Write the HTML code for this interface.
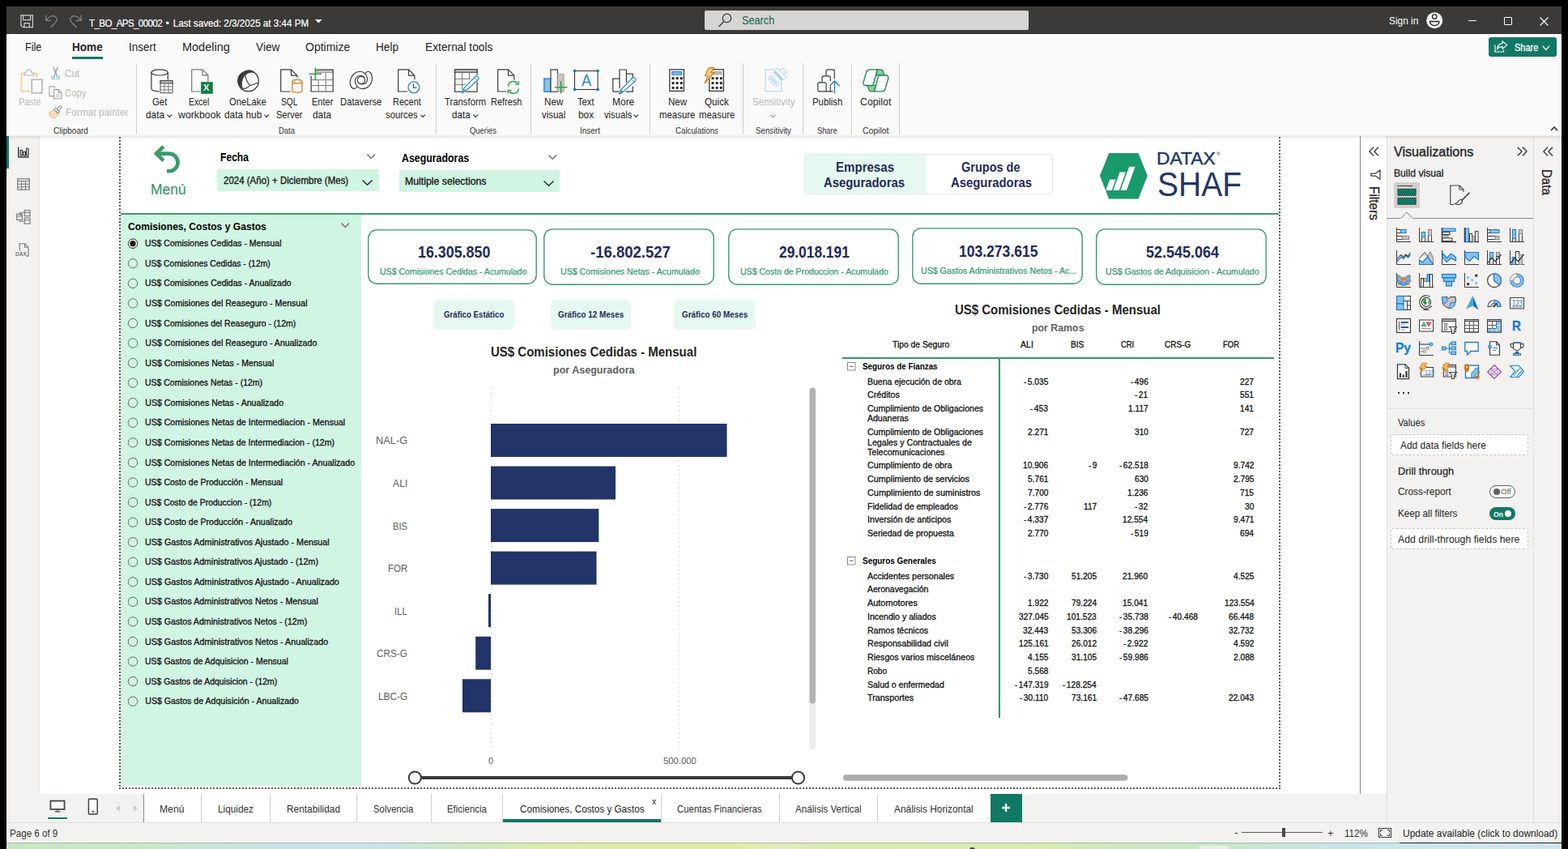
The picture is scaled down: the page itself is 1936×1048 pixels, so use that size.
<!DOCTYPE html>
<html lang="es"><head><meta charset="utf-8"><title>T_BO_APS_00002 - Power BI Desktop</title>
<style>
html,body{margin:0;padding:0;}
body{width:1936px;height:1048px;background:#000;overflow:hidden;position:relative;
 font-family:"Liberation Sans",sans-serif;color:#252423;}
.b{position:absolute;box-sizing:border-box;}
.t{position:absolute;white-space:nowrap;line-height:1;transform-origin:0 0;}
svg{overflow:visible;}
.dr{-webkit-text-stroke:0.3px currentColor;}
.dr2{-webkit-text-stroke:0.2px currentColor;}
</style></head>
<body>
<div class="b win" style="left:8px;top:8px;width:1920px;height:1032px;background:#ffffff;"></div>
<div class="b" style="left:8px;top:1040px;width:1920px;height:8px;background:linear-gradient(90deg,#c8e6c2 0%,#c9e7c4 8%,#c8e6de 15%,#c6e4ea 18%,#c6e5e8 24%,#cde8c6 29%,#d9ecac 34%,#deeda4 47%,#dfecc0 50%,#d6ebae 53%,#d8ecae 66%,#cde8c0 72%,#c8e6cf 80%,#c8e6e6 85%,#d0e5ee 100%);"></div>
<div class="b" style="left:8px;top:1040px;width:1920px;height:1px;background:rgba(110,130,110,.5);"></div>
<div class="b" style="left:1480px;top:1044px;width:38px;height:6px;background:#e6f0e6;border-radius:4px 4px 0 0;"></div>
<div class="b" style="left:1197px;top:1046px;width:7px;height:4px;background:#3a4a3c;border-radius:3px 3px 0 0;"></div>
<div class="b" style="left:1728px;top:1039px;width:200px;height:2px;background:#1b1a19;"></div>
<div class="b" style="left:8px;top:8px;width:1920px;height:34px;background:#3b3a39;"></div>
<div class="b" style="left:8px;top:41px;width:1920px;height:1px;background:#323130;"></div>
<div class="b" style="left:870px;top:13px;width:400px;height:24px;background:#d6d5d3;border-radius:2px;"></div>
<div class="b" style="left:9px;top:43px;width:1919px;height:124px;background:#fafafa;"></div>
<div class="b" style="left:8px;top:167px;width:1920px;height:1px;background:#f0f0f0;"></div>
<div class="b" style="left:8px;top:168px;width:40px;height:848px;background:#f3f2f1;"></div>
<div class="b" style="left:8px;top:168px;width:3px;height:40px;background:#117865;"></div>
<div class="b" style="left:48px;top:169px;width:1px;height:811px;background:#e6e5e3;"></div>
<div class="b" style="left:1679px;top:168px;width:1px;height:812px;background:#8a8886;"></div>
<div class="b" style="left:1712px;top:168px;width:216px;height:848px;background:#f3f2f1;"></div>
<div class="b" style="left:1712px;top:168px;width:1px;height:848px;background:#e1dfdd;"></div>
<div class="b" style="left:1893px;top:168px;width:1px;height:848px;background:#e1dfdd;"></div>
<div class="b" style="left:8px;top:980px;width:1704px;height:36px;background:#f3f2f1;"></div>
<div class="b" style="left:177px;top:980px;width:1046px;height:35px;background:#ffffff;"></div>
<div class="b" style="left:8px;top:1015px;width:1920px;height:1px;background:#e1dfdd;"></div>
<div class="b" style="left:8px;top:1016px;width:1920px;height:23px;background:#f3f2f1;"></div>
<div class="b" style="left:8px;top:1039px;width:1920px;height:1px;background:#ffffff;"></div>
<div class="b" style="left:8px;top:168px;width:1920px;height:5px;background:linear-gradient(180deg,rgba(0,0,0,.11),rgba(0,0,0,.04) 45%,rgba(0,0,0,0));z-index:5;"></div>
<span class="t dr2" style="left:110.00px;top:23px;font-size:12.8px;transform:scaleX(0.9088);color:#ffffff;"><span style="letter-spacing:-0.704px">T_BO_APS_00002</span><span style="display:inline-block;width:15.07px;text-align:center"> • </span>Last saved: 2/3/2025 at 3:44 PM</span>
<span class="t" style="left:915.80px;top:19px;font-size:13.8px;transform:scaleX(0.9216);color:#14604f;">Search</span>
<span class="t" style="left:1714.90px;top:19px;font-size:13.4px;transform:scaleX(0.8859);color:#ffffff;">Sign in</span>
<span class="t" style="left:31.00px;top:51px;font-size:14.4px;transform:scaleX(0.8748);color:#252423;">File</span>
<span class="t" style="left:89.30px;top:51px;font-size:14.4px;transform:scaleX(0.9423);font-weight:700;color:#252423;">Home</span>
<span class="t" style="left:158.80px;top:51px;font-size:14.4px;transform:scaleX(0.9357);color:#252423;">Insert</span>
<span class="t" style="left:225.00px;top:51px;font-size:14.4px;transform:scaleX(1.0062);color:#252423;">Modeling</span>
<span class="t" style="left:315.50px;top:51px;font-size:14.4px;transform:scaleX(0.9531);color:#252423;">View</span>
<span class="t" style="left:376.80px;top:51px;font-size:14.4px;transform:scaleX(0.9716);color:#252423;">Optimize</span>
<span class="t" style="left:464.30px;top:51px;font-size:14.4px;transform:scaleX(0.9454);color:#252423;">Help</span>
<span class="t" style="left:525.00px;top:51px;font-size:14.4px;transform:scaleX(0.9571);color:#252423;">External tools</span>
<div class="b" style="left:89px;top:70px;width:38px;height:3px;background:#117865;"></div>
<div class="b" style="left:1838px;top:46px;width:84px;height:24px;background:#117865;border-radius:3px;"></div>
<span class="t" style="left:1869.70px;top:53px;font-size:12.3px;transform:scaleX(0.8926);color:#ffffff;-webkit-text-stroke:0.3px #fff;">Share</span>
<div class="b" style="left:168px;top:78px;width:1px;height:88px;background:#d2d0ce;"></div>
<div class="b" style="left:538px;top:78px;width:1px;height:88px;background:#d2d0ce;"></div>
<div class="b" style="left:655px;top:78px;width:1px;height:88px;background:#d2d0ce;"></div>
<div class="b" style="left:802px;top:78px;width:1px;height:88px;background:#d2d0ce;"></div>
<div class="b" style="left:917px;top:78px;width:1px;height:88px;background:#d2d0ce;"></div>
<div class="b" style="left:991px;top:78px;width:1px;height:88px;background:#d2d0ce;"></div>
<div class="b" style="left:1051px;top:78px;width:1px;height:88px;background:#d2d0ce;"></div>
<div class="b" style="left:1110px;top:78px;width:1px;height:88px;background:#d2d0ce;"></div>
<span class="t" style="left:66.00px;top:156px;font-size:11.2px;transform:scaleX(0.8969);color:#323130;">Clipboard</span>
<span class="t" style="left:343.70px;top:156px;font-size:11.2px;transform:scaleX(0.8454);color:#323130;">Data</span>
<span class="t" style="left:580.00px;top:156px;font-size:11.2px;transform:scaleX(0.8415);color:#323130;">Queries</span>
<span class="t" style="left:716.30px;top:156px;font-size:11.2px;transform:scaleX(0.8925);color:#323130;">Insert</span>
<span class="t" style="left:833.50px;top:156px;font-size:11.2px;transform:scaleX(0.8687);color:#323130;">Calculations</span>
<span class="t" style="left:932.70px;top:156px;font-size:11.2px;transform:scaleX(0.8727);color:#323130;">Sensitivity</span>
<span class="t" style="left:1008.90px;top:156px;font-size:11.2px;transform:scaleX(0.8231);color:#323130;">Share</span>
<span class="t" style="left:1064.60px;top:156px;font-size:11.2px;transform:scaleX(0.9293);color:#323130;">Copilot</span>
<span class="t" style="left:22.60px;top:120px;font-size:12.2px;transform:scaleX(0.8783);color:#bebbb8;">Paste</span>
<span class="t" style="left:80.30px;top:85px;font-size:12.2px;transform:scaleX(0.9639);color:#bebbb8;">Cut</span>
<span class="t" style="left:80.30px;top:109px;font-size:12.2px;transform:scaleX(0.9339);color:#bebbb8;">Copy</span>
<span class="t" style="left:80.50px;top:133px;font-size:12.2px;transform:scaleX(0.9782);color:#bebbb8;">Format painter</span>
<span class="t" style="left:188.40px;top:120px;font-size:12.2px;transform:scaleX(0.9357);color:#252423;">Get</span>
<span class="t" style="left:179.70px;top:136px;font-size:12.2px;transform:scaleX(0.9770);color:#252423;">data</span>
<svg class="b" style="left:205.9px;top:141px;" width="6.4" height="4.4" viewBox="0 0 6.4 4.4"><path d="M0.5 0.6 L3.2 3.5 L5.9 0.6" fill="none" stroke="#323130" stroke-width="1.15"/></svg>
<span class="t" style="left:233.20px;top:120px;font-size:12.2px;transform:scaleX(0.8514);color:#252423;">Excel</span>
<span class="t" style="left:219.60px;top:136px;font-size:12.2px;transform:scaleX(1.0093);color:#252423;">workbook</span>
<span class="t" style="left:282.95px;top:120px;font-size:12.2px;transform:scaleX(0.9229);color:#252423;">OneLake</span>
<span class="t" style="left:276.70px;top:136px;font-size:12.2px;transform:scaleX(0.9770);color:#252423;">data hub</span>
<svg class="b" style="left:325.6px;top:141px;" width="6.4" height="4.4" viewBox="0 0 6.4 4.4"><path d="M0.5 0.6 L3.2 3.5 L5.9 0.6" fill="none" stroke="#323130" stroke-width="1.15"/></svg>
<span class="t" style="left:347.20px;top:120px;font-size:12.2px;transform:scaleX(0.8438);color:#252423;">SQL</span>
<span class="t" style="left:341.40px;top:136px;font-size:12.2px;transform:scaleX(0.9044);color:#252423;">Server</span>
<span class="t" style="left:384.80px;top:120px;font-size:12.2px;transform:scaleX(0.9053);color:#252423;">Enter</span>
<span class="t" style="left:386.00px;top:136px;font-size:12.2px;transform:scaleX(0.9728);color:#252423;">data</span>
<span class="t" style="left:420.10px;top:120px;font-size:12.2px;transform:scaleX(0.9244);color:#252423;">Dataverse</span>
<span class="t" style="left:484.55px;top:120px;font-size:12.2px;transform:scaleX(0.9028);color:#252423;">Recent</span>
<span class="t" style="left:476.00px;top:136px;font-size:12.2px;transform:scaleX(0.9317);color:#252423;">sources</span>
<svg class="b" style="left:518.8px;top:141px;" width="6.4" height="4.4" viewBox="0 0 6.4 4.4"><path d="M0.5 0.6 L3.2 3.5 L5.9 0.6" fill="none" stroke="#323130" stroke-width="1.15"/></svg>
<span class="t" style="left:549.40px;top:120px;font-size:12.2px;transform:scaleX(0.9286);color:#252423;">Transform</span>
<span class="t" style="left:557.80px;top:136px;font-size:12.2px;transform:scaleX(0.9518);color:#252423;">data</span>
<svg class="b" style="left:583.6px;top:141px;" width="6.4" height="4.4" viewBox="0 0 6.4 4.4"><path d="M0.5 0.6 L3.2 3.5 L5.9 0.6" fill="none" stroke="#323130" stroke-width="1.15"/></svg>
<span class="t" style="left:605.95px;top:120px;font-size:12.2px;transform:scaleX(0.8966);color:#252423;">Refresh</span>
<span class="t" style="left:672.40px;top:120px;font-size:12.2px;transform:scaleX(0.9588);color:#252423;">New</span>
<span class="t" style="left:669.00px;top:136px;font-size:12.2px;transform:scaleX(0.9393);color:#252423;">visual</span>
<span class="t" style="left:713.10px;top:120px;font-size:12.2px;transform:scaleX(0.9207);color:#252423;">Text</span>
<span class="t" style="left:714.10px;top:136px;font-size:12.2px;transform:scaleX(0.9761);color:#252423;">box</span>
<span class="t" style="left:755.55px;top:120px;font-size:12.2px;transform:scaleX(0.9821);color:#252423;">More</span>
<span class="t" style="left:745.70px;top:136px;font-size:12.2px;transform:scaleX(0.9198);color:#252423;">visuals</span>
<svg class="b" style="left:782.3px;top:141px;" width="6.4" height="4.4" viewBox="0 0 6.4 4.4"><path d="M0.5 0.6 L3.2 3.5 L5.9 0.6" fill="none" stroke="#323130" stroke-width="1.15"/></svg>
<span class="t" style="left:824.60px;top:120px;font-size:12.2px;transform:scaleX(0.9506);color:#252423;">New</span>
<span class="t" style="left:813.90px;top:136px;font-size:12.2px;transform:scaleX(0.9354);color:#252423;">measure</span>
<span class="t" style="left:870.15px;top:120px;font-size:12.2px;transform:scaleX(0.9588);color:#252423;">Quick</span>
<span class="t" style="left:862.90px;top:136px;font-size:12.2px;transform:scaleX(0.9354);color:#252423;">measure</span>
<span class="t" style="left:1002.90px;top:120px;font-size:12.2px;transform:scaleX(0.9346);color:#252423;">Publish</span>
<span class="t" style="left:1061.80px;top:120px;font-size:12.2px;transform:scaleX(1.0111);color:#252423;">Copilot</span>
<span class="t" style="left:928.70px;top:120px;font-size:12.2px;transform:scaleX(0.9578);color:#bebbb8;">Sensitivity</span>
<svg class="b" style="left:951.3px;top:140.6px;" width="7" height="5" viewBox="0 0 7 5"><path d="M0.6 0.8 L3.5 3.8 L6.4 0.8" fill="none" stroke="#a19f9d" stroke-width="1.2"/></svg>
<svg class="b" style="left:1914px;top:154.5px;" width="10" height="7" viewBox="0 0 10 7"><path d="M1 6 L5 2 L9 6" fill="none" stroke="#323130" stroke-width="1.6"/></svg>
<div class="b" style="left:177px;top:980px;width:1px;height:35px;background:#8a8886;"></div>
<div class="b" style="left:248px;top:980px;width:1px;height:35px;background:#d2d0ce;"></div>
<div class="b" style="left:333px;top:980px;width:1px;height:35px;background:#d2d0ce;"></div>
<div class="b" style="left:440px;top:980px;width:1px;height:35px;background:#d2d0ce;"></div>
<div class="b" style="left:532px;top:980px;width:1px;height:35px;background:#d2d0ce;"></div>
<div class="b" style="left:620px;top:980px;width:1px;height:35px;background:#d2d0ce;"></div>
<div class="b" style="left:816px;top:980px;width:1px;height:35px;background:#d2d0ce;"></div>
<div class="b" style="left:962px;top:980px;width:1px;height:35px;background:#d2d0ce;"></div>
<div class="b" style="left:1083px;top:980px;width:1px;height:35px;background:#d2d0ce;"></div>
<div class="b" style="left:1223px;top:980px;width:1px;height:35px;background:#d2d0ce;"></div>
<span class="t" style="left:197.00px;top:993px;font-size:12.5px;transform:scaleX(0.9722);color:#323130;">Menú</span>
<span class="t" style="left:269.00px;top:993px;font-size:12.5px;transform:scaleX(0.9449);color:#323130;">Liquidez</span>
<span class="t" style="left:353.90px;top:993px;font-size:12.5px;transform:scaleX(0.9511);color:#323130;">Rentabilidad</span>
<span class="t" style="left:461.00px;top:993px;font-size:12.5px;transform:scaleX(0.9114);color:#323130;">Solvencia</span>
<span class="t" style="left:551.60px;top:993px;font-size:12.5px;transform:scaleX(0.9122);color:#323130;">Eficiencia</span>
<span class="t" style="left:641.60px;top:993px;font-size:12.5px;transform:scaleX(0.9369);color:#201f1e;">Comisiones, Costos y Gastos</span>
<span class="t" style="left:836.40px;top:993px;font-size:12.5px;transform:scaleX(0.9115);color:#323130;">Cuentas Financieras</span>
<span class="t" style="left:981.80px;top:993px;font-size:12.5px;transform:scaleX(0.9333);color:#323130;">Análisis Vertical</span>
<span class="t" style="left:1104.30px;top:993px;font-size:12.5px;transform:scaleX(0.9502);color:#323130;">Análisis Horizontal</span>
<div class="b" style="left:621px;top:1011px;width:195px;height:4px;background:#117865;"></div>
<span class="t" style="left:805.30px;top:984px;font-size:11px;transform:scaleX(0.9636);color:#252423;">x</span>
<div class="b" style="left:1223px;top:980px;width:39px;height:35px;background:#117865;"></div>
<svg class="b" style="left:1236px;top:990.5px;" width="12" height="12" viewBox="0 0 12 12"><path d="M6 1 V11 M1 6 H11" stroke="#fff" stroke-width="2.4" fill="none"/></svg>
<div class="b" style="left:59px;top:1009px;width:24px;height:2px;background:#117865;border-radius:1px;"></div>
<span class="t" style="left:12.30px;top:1023px;font-size:12px;transform:scaleX(0.9661);color:#323130;">Page 6 of 9</span>
<span class="t" style="left:1523.60px;top:1022px;font-size:12px;transform:scaleX(1.1260);color:#323130;">-</span>
<div class="b" style="left:1533px;top:1027px;width:100px;height:1px;background:#605e5c;"></div>
<div class="b" style="left:1583px;top:1022px;width:4px;height:11px;background:#484644;"></div>
<span class="t" style="left:1639.20px;top:1023px;font-size:12px;color:#323130;">+</span>
<span class="t" style="left:1660.40px;top:1023px;font-size:12px;transform:scaleX(0.9698);color:#323130;">112%</span>
<span class="t" style="left:1732.30px;top:1023px;font-size:12px;transform:scaleX(0.9953);color:#252423;">Update available (click to download)</span>
<div class="b" style="left:147px;top:169px;width:2px;height:802px;background:repeating-linear-gradient(180deg,#605e5c 0 2px,transparent 2px 4px);"></div>
<div class="b" style="left:1579px;top:169px;width:2px;height:802px;background:repeating-linear-gradient(180deg,#605e5c 0 2px,transparent 2px 4px);"></div>
<div class="b" style="left:147px;top:972px;width:1434px;height:2px;background:repeating-linear-gradient(90deg,#605e5c 0 2px,transparent 2px 4px);"></div>
<div class="b" style="left:149px;top:263px;width:1430px;height:2px;background:#3a9a70;"></div>
<svg class="b" style="left:188px;top:178px;" width="36" height="38" viewBox="0 0 36 38"><path d="M5.6 11.6 H20.7 A10.85 10.85 0 0 1 20.7 33.3 H18" fill="none" stroke="#3a9a6c" stroke-width="4.6"/><path d="M13.9 2.8 L5 11.6 L13.9 20.4" fill="none" stroke="#3a9a6c" stroke-width="4.6" stroke-linejoin="miter"/></svg>
<span class="t dr2" style="left:186.40px;top:225px;font-size:18.9px;transform:scaleX(0.9222);color:#3a9a6c;">Menú</span>
<span class="t" style="left:272.00px;top:187px;font-size:14px;transform:scaleX(0.8650);font-weight:700;color:#000;">Fecha</span>
<svg class="b" style="left:453px;top:190.2px;" width="10.5" height="6" viewBox="0 0 10.5 6"><path d="M0.5 0.5 L5.25 5.3 L10 0.5" fill="none" stroke="#605e5c" stroke-width="1.2"/></svg>
<div class="b" style="left:268px;top:209px;width:199.5px;height:27px;background:#d1f5e3;"></div>
<span class="t dr" style="left:275.80px;top:217px;font-size:12px;transform:scaleX(0.9574);color:#111;">2024 (Año) + Diciembre (Mes)</span>
<svg class="b" style="left:447px;top:221.5px;" width="13" height="7" viewBox="0 0 13 7"><path d="M0.5 0.5 L6.5 6.3 L12.5 0.5" fill="none" stroke="#252423" stroke-width="1.3"/></svg>
<span class="t" style="left:496.30px;top:188px;font-size:14px;transform:scaleX(0.8837);font-weight:700;color:#000;">Aseguradoras</span>
<svg class="b" style="left:676.5px;top:191px;" width="10.5" height="6" viewBox="0 0 10.5 6"><path d="M0.5 0.5 L5.25 5.3 L10 0.5" fill="none" stroke="#605e5c" stroke-width="1.2"/></svg>
<div class="b" style="left:492.5px;top:210px;width:198px;height:27px;background:#d1f5e3;"></div>
<span class="t dr" style="left:499.50px;top:218px;font-size:12px;transform:scaleX(1.0250);color:#111;">Multiple selections</span>
<svg class="b" style="left:670.7px;top:222.5px;" width="13" height="7" viewBox="0 0 13 7"><path d="M0.5 0.5 L6.5 6.3 L12.5 0.5" fill="none" stroke="#252423" stroke-width="1.3"/></svg>
<div class="b" style="left:993px;top:190px;width:307px;height:50px;background:#ffffff;border:1px solid #e6e6e6;border-radius:3px;"></div>
<div class="b" style="left:994px;top:191px;width:148.5px;height:48px;background:#e6f9f0;border-radius:2px 0 0 2px;"></div>
<span class="t" style="left:1031.50px;top:199px;font-size:16px;transform:scaleX(0.9413);font-weight:700;color:#1f2a5c;">Empresas</span>
<span class="t" style="left:1017.30px;top:218px;font-size:16px;transform:scaleX(0.9294);font-weight:700;color:#1f2a5c;">Aseguradoras</span>
<span class="t" style="left:1186.95px;top:199px;font-size:16px;transform:scaleX(0.9062);font-weight:700;color:#1f2a5c;">Grupos de</span>
<span class="t" style="left:1173.50px;top:218px;font-size:16px;transform:scaleX(0.9294);font-weight:700;color:#1f2a5c;">Aseguradoras</span>
<svg class="b" style="left:1356px;top:186px;" width="64" height="62" viewBox="0 0 64 62"><polygon points="2,31 13.2,3 49.5,3 60.8,31 49.5,59.5 13.2,59.5" fill="#199a6b"/><polygon points="9.3,48.9 16.7,48.9 21.6,35.5 14.2,35.5" fill="#fff"/><polygon points="18.4,48.9 25.8,48.9 34,26.6 26.6,26.6" fill="#fff"/><polygon points="27.5,48.9 34.9,48.9 45.6,19.8 38.2,19.8" fill="#fff"/></svg>
<span class="t" style="left:1428.10px;top:185px;font-size:22.6px;transform:scaleX(1.0098);color:#1f3768;-webkit-text-stroke:0.45px #1f3768;">DATAX</span>
<span class="t" style="left:1502.30px;top:188px;font-size:5.5px;transform:scaleX(1.1351);color:#1f3768;">®</span>
<span class="t" style="left:1428.90px;top:207px;font-size:42.4px;transform:scaleX(0.9205);color:#1f3768;">SHAF</span>
<div class="b" style="left:149px;top:265px;width:297px;height:705px;background:#d1f5e3;"></div>
<span class="t" style="left:158.00px;top:273px;font-size:13px;transform:scaleX(0.9308);font-weight:700;color:#000;">Comisiones, Costos y Gastos</span>
<svg class="b" style="left:420.7px;top:275px;" width="10.5" height="6" viewBox="0 0 10.5 6"><path d="M0.5 0.5 L5.25 5.3 L10 0.5" fill="none" stroke="#605e5c" stroke-width="1.2"/></svg>
<span class="t dr" style="left:179.30px;top:295px;font-size:10.6px;transform:scaleX(0.9902);color:#111;">US$ Comisiones Cedidas - Mensual</span>
<span class="t dr" style="left:179.30px;top:320px;font-size:10.6px;transform:scaleX(0.9811);color:#111;">US$ Comisiones Cedidas - (12m)</span>
<span class="t dr" style="left:179.30px;top:344px;font-size:10.6px;transform:scaleX(0.9925);color:#111;">US$ Comisiones Cedidas - Anualizado</span>
<span class="t dr" style="left:179.30px;top:369px;font-size:10.6px;color:#111;">US$ Comisiones del Reaseguro - Mensual</span>
<span class="t dr" style="left:179.30px;top:394px;font-size:10.6px;transform:scaleX(0.9918);color:#111;">US$ Comisiones del Reaseguro - (12m)</span>
<span class="t dr" style="left:179.30px;top:418px;font-size:10.6px;color:#111;">US$ Comisiones del Reaseguro - Anualizado</span>
<span class="t dr" style="left:179.30px;top:443px;font-size:10.6px;color:#111;">US$ Comisiones Netas - Mensual</span>
<span class="t dr" style="left:179.30px;top:467px;font-size:10.6px;transform:scaleX(0.9892);color:#111;">US$ Comisiones Netas - (12m)</span>
<span class="t dr" style="left:179.30px;top:492px;font-size:10.6px;color:#111;">US$ Comisiones Netas - Anualizado</span>
<span class="t dr" style="left:179.30px;top:516px;font-size:10.6px;transform:scaleX(1.0042);color:#111;">US$ Comisiones Netas de Intermediacion - Mensual</span>
<span class="t dr" style="left:179.30px;top:541px;font-size:10.6px;color:#111;">US$ Comisiones Netas de Intermediacion - (12m)</span>
<span class="t dr" style="left:179.30px;top:566px;font-size:10.6px;transform:scaleX(1.0047);color:#111;">US$ Comisiones Netas de Intermediación - Anualizado</span>
<span class="t dr" style="left:179.30px;top:590px;font-size:10.6px;transform:scaleX(0.9932);color:#111;">US$ Costo de Producción - Mensual</span>
<span class="t dr" style="left:179.30px;top:615px;font-size:10.6px;transform:scaleX(0.9832);color:#111;">US$ Costo de Produccion - (12m)</span>
<span class="t dr" style="left:179.30px;top:639px;font-size:10.6px;transform:scaleX(0.9942);color:#111;">US$ Costo de Producción - Anualizado</span>
<span class="t dr" style="left:179.30px;top:664px;font-size:10.6px;transform:scaleX(1.0148);color:#111;">US$ Gastos Administrativos Ajustado - Mensual</span>
<span class="t dr" style="left:179.30px;top:688px;font-size:10.6px;transform:scaleX(1.0095);color:#111;">US$ Gastos Administrativos Ajustado - (12m)</span>
<span class="t dr" style="left:179.30px;top:713px;font-size:10.6px;transform:scaleX(1.0158);color:#111;">US$ Gastos Administrativos Ajustado - Anualizado</span>
<span class="t dr" style="left:179.30px;top:737px;font-size:10.6px;transform:scaleX(1.0123);color:#111;">US$ Gastos Administrativos Netos - Mensual</span>
<span class="t dr" style="left:179.30px;top:762px;font-size:10.6px;transform:scaleX(1.0060);color:#111;">US$ Gastos Administrativos Netos - (12m)</span>
<span class="t dr" style="left:179.30px;top:787px;font-size:10.6px;transform:scaleX(1.0134);color:#111;">US$ Gastos Administrativos Netos - Anualizado</span>
<span class="t dr" style="left:179.30px;top:811px;font-size:10.6px;transform:scaleX(0.9947);color:#111;">US$ Gastos de Adquisicion - Mensual</span>
<span class="t dr" style="left:179.30px;top:836px;font-size:10.6px;transform:scaleX(0.9864);color:#111;">US$ Gastos de Adquisicion - (12m)</span>
<span class="t dr" style="left:179.30px;top:860px;font-size:10.6px;color:#111;">US$ Gastos de Adquisición - Anualizado</span>
<svg class="b" style="left:0px;top:0px;pointer-events:none;" width="1936" height="1048" viewBox="0 0 1936 1048"><circle cx="164" cy="300.70" r="5.7" fill="none" stroke="#706e6c" stroke-width="1"/><circle cx="164" cy="300.70" r="5.7" fill="#fff" stroke="#3b3a39" stroke-width="1"/><circle cx="164" cy="300.70" r="3.7" fill="#1b1b1b"/><circle cx="164" cy="325.26" r="5.7" fill="none" stroke="#706e6c" stroke-width="1"/><circle cx="164" cy="349.83" r="5.7" fill="none" stroke="#706e6c" stroke-width="1"/><circle cx="164" cy="374.39" r="5.7" fill="none" stroke="#706e6c" stroke-width="1"/><circle cx="164" cy="398.96" r="5.7" fill="none" stroke="#706e6c" stroke-width="1"/><circle cx="164" cy="423.52" r="5.7" fill="none" stroke="#706e6c" stroke-width="1"/><circle cx="164" cy="448.09" r="5.7" fill="none" stroke="#706e6c" stroke-width="1"/><circle cx="164" cy="472.65" r="5.7" fill="none" stroke="#706e6c" stroke-width="1"/><circle cx="164" cy="497.22" r="5.7" fill="none" stroke="#706e6c" stroke-width="1"/><circle cx="164" cy="521.78" r="5.7" fill="none" stroke="#706e6c" stroke-width="1"/><circle cx="164" cy="546.35" r="5.7" fill="none" stroke="#706e6c" stroke-width="1"/><circle cx="164" cy="570.91" r="5.7" fill="none" stroke="#706e6c" stroke-width="1"/><circle cx="164" cy="595.48" r="5.7" fill="none" stroke="#706e6c" stroke-width="1"/><circle cx="164" cy="620.05" r="5.7" fill="none" stroke="#706e6c" stroke-width="1"/><circle cx="164" cy="644.61" r="5.7" fill="none" stroke="#706e6c" stroke-width="1"/><circle cx="164" cy="669.17" r="5.7" fill="none" stroke="#706e6c" stroke-width="1"/><circle cx="164" cy="693.74" r="5.7" fill="none" stroke="#706e6c" stroke-width="1"/><circle cx="164" cy="718.31" r="5.7" fill="none" stroke="#706e6c" stroke-width="1"/><circle cx="164" cy="742.87" r="5.7" fill="none" stroke="#706e6c" stroke-width="1"/><circle cx="164" cy="767.43" r="5.7" fill="none" stroke="#706e6c" stroke-width="1"/><circle cx="164" cy="792.00" r="5.7" fill="none" stroke="#706e6c" stroke-width="1"/><circle cx="164" cy="816.57" r="5.7" fill="none" stroke="#706e6c" stroke-width="1"/><circle cx="164" cy="841.13" r="5.7" fill="none" stroke="#706e6c" stroke-width="1"/><circle cx="164" cy="865.69" r="5.7" fill="none" stroke="#706e6c" stroke-width="1"/></svg>
<svg class="b" style="left:454px;top:283px;" width="209" height="68" viewBox="0 0 209 68"><rect x="0.8" y="0.8" width="207.4" height="66.4" rx="10.5" fill="#fff" stroke="#2f9a6c" stroke-width="1.35"/></svg>
<span class="t" style="left:515.75px;top:302px;font-size:19.5px;transform:scaleX(0.9150);font-weight:700;color:#1f2a5c;">16.305.850</span>
<span class="t dr2" style="left:468.70px;top:330px;font-size:10.7px;transform:scaleX(0.9861);color:#2f9a6c;">US$ Comisiones Cedidas - Acumulado</span>
<svg class="b" style="left:671px;top:282px;" width="211" height="70" viewBox="0 0 211 70"><rect x="0.8" y="0.8" width="209.4" height="68.4" rx="10.5" fill="#fff" stroke="#2f9a6c" stroke-width="1.35"/></svg>
<span class="t" style="left:728.70px;top:302px;font-size:19.5px;transform:scaleX(0.9492);font-weight:700;color:#1f2a5c;">-16.802.527</span>
<span class="t dr2" style="left:691.80px;top:330px;font-size:10.7px;transform:scaleX(0.9938);color:#2f9a6c;">US$ Comisiones Netas - Acumulado</span>
<svg class="b" style="left:899px;top:282px;" width="211" height="70" viewBox="0 0 211 70"><rect x="0.8" y="0.8" width="209.4" height="68.4" rx="10.5" fill="#fff" stroke="#2f9a6c" stroke-width="1.35"/></svg>
<span class="t" style="left:962.00px;top:302px;font-size:19.5px;transform:scaleX(0.8894);font-weight:700;color:#1f2a5c;">29.018.191</span>
<span class="t dr2" style="left:914.30px;top:330px;font-size:10.7px;transform:scaleX(0.9872);color:#2f9a6c;">US$ Costo de Produccion - Acumulado</span>
<svg class="b" style="left:1126px;top:281px;" width="211" height="70" viewBox="0 0 211 70"><rect x="0.8" y="0.8" width="209.4" height="68.4" rx="10.5" fill="#fff" stroke="#2f9a6c" stroke-width="1.35"/></svg>
<span class="t" style="left:1184.25px;top:301px;font-size:19.5px;transform:scaleX(0.8991);font-weight:700;color:#1f2a5c;">103.273.615</span>
<span class="t dr2" style="left:1136.75px;top:329px;font-size:10.7px;transform:scaleX(0.9930);color:#2f9a6c;">US$ Gastos Administrativos Netos - Ac...</span>
<svg class="b" style="left:1353px;top:282px;" width="211" height="70" viewBox="0 0 211 70"><rect x="0.8" y="0.8" width="209.4" height="68.4" rx="10.5" fill="#fff" stroke="#2f9a6c" stroke-width="1.35"/></svg>
<span class="t" style="left:1415.00px;top:302px;font-size:19.5px;transform:scaleX(0.9222);font-weight:700;color:#1f2a5c;">52.545.064</span>
<span class="t dr2" style="left:1364.80px;top:330px;font-size:10.7px;transform:scaleX(0.9890);color:#2f9a6c;">US$ Gastos de Adquisicion - Acumulado</span>
<div class="b" style="left:535px;top:370.4px;width:100px;height:36.6px;background:#e6f9f0;border-radius:6px;"></div>
<span class="t" style="left:547.70px;top:383px;font-size:11px;transform:scaleX(0.8807);font-weight:700;color:#1f2a5c;">Gráfico Estático</span>
<div class="b" style="left:680px;top:370.4px;width:99px;height:36.6px;background:#e6f9f0;border-radius:6px;"></div>
<span class="t" style="left:688.70px;top:383px;font-size:11px;transform:scaleX(0.8984);font-weight:700;color:#1f2a5c;">Gráfico 12 Meses</span>
<div class="b" style="left:832px;top:370.4px;width:100.5px;height:36.6px;background:#e6f9f0;border-radius:6px;"></div>
<span class="t" style="left:841.70px;top:383px;font-size:11px;transform:scaleX(0.8984);font-weight:700;color:#1f2a5c;">Gráfico 60 Meses</span>
<span class="t" style="left:606.20px;top:427px;font-size:16.6px;transform:scaleX(0.9042);font-weight:700;color:#252423;">US$ Comisiones Cedidas - Mensual</span>
<span class="t" style="left:683.30px;top:450px;font-size:13px;transform:scaleX(0.9639);font-weight:700;color:#605e5c;">por Aseguradora</span>
<svg class="b" style="left:0px;top:0px;pointer-events:none;" width="1936" height="1048" viewBox="0 0 1936 1048"><line x1="606.5" y1="478.7" x2="606.5" y2="926" stroke="#bdbbb9" stroke-width="1" stroke-dasharray="1.1 4.5"/><line x1="838.5" y1="478.7" x2="838.5" y2="926" stroke="#bdbbb9" stroke-width="1" stroke-dasharray="1.1 4.5"/><rect x="606" y="523.00" width="291.50" height="41" fill="#223468"/><rect x="606" y="575.55" width="154.00" height="41" fill="#223468"/><rect x="606" y="628.10" width="133.30" height="41" fill="#223468"/><rect x="606" y="680.65" width="130.50" height="41" fill="#223468"/><rect x="603" y="733.20" width="3.00" height="41" fill="#223468"/><rect x="587.2" y="785.75" width="18.80" height="41" fill="#223468"/><rect x="571" y="838.30" width="35.00" height="41" fill="#223468"/><rect x="999.5" y="478.5" width="7.5" height="447" rx="3.75" fill="#ededed"/><rect x="999.5" y="478.5" width="7.5" height="390" rx="3.75" fill="#b3b3b3"/><line x1="512" y1="960" x2="986" y2="960" stroke="#3b3a39" stroke-width="4"/><circle cx="512.3" cy="960" r="7.6" fill="#fff" stroke="#3b3a39" stroke-width="2"/><circle cx="985.5" cy="960" r="7.6" fill="#fff" stroke="#3b3a39" stroke-width="2"/><rect x="1041" y="956.3" width="351.5" height="7.4" rx="3.7" fill="#adadad"/></svg>
<span class="t" style="left:463.90px;top:538px;font-size:12px;transform:scaleX(1.0716);color:#605e5c;">NAL-G</span>
<span class="t" style="left:484.90px;top:591px;font-size:12px;transform:scaleX(1.0160);color:#605e5c;">ALI</span>
<span class="t" style="left:485.20px;top:644px;font-size:12px;transform:scaleX(0.9306);color:#605e5c;">BIS</span>
<span class="t" style="left:478.80px;top:696px;font-size:12px;transform:scaleX(0.9633);color:#605e5c;">FOR</span>
<span class="t" style="left:487.40px;top:749px;font-size:12px;transform:scaleX(0.9471);color:#605e5c;">ILL</span>
<span class="t" style="left:465.40px;top:801px;font-size:12px;transform:scaleX(0.9776);color:#605e5c;">CRS-G</span>
<span class="t" style="left:466.90px;top:854px;font-size:12px;transform:scaleX(0.9898);color:#605e5c;">LBC-G</span>
<span class="t" style="left:602.96px;top:934px;font-size:10.7px;transform:scaleX(1.0200);color:#605e5c;">0</span>
<span class="t" style="left:818.55px;top:934px;font-size:10.7px;transform:scaleX(1.0574);color:#605e5c;">500.000</span>
<span class="t" style="left:1179.30px;top:375px;font-size:16.6px;transform:scaleX(0.9028);font-weight:700;color:#252423;">US$ Comisiones Cedidas - Mensual</span>
<span class="t" style="left:1274.00px;top:398px;font-size:13px;transform:scaleX(0.9499);font-weight:700;color:#605e5c;">por Ramos</span>
<span class="t dr" style="left:1102.30px;top:420px;font-size:10.7px;transform:scaleX(0.9660);color:#111;">Tipo de Seguro</span>
<span class="t dr" style="left:1260.00px;top:420px;font-size:10.7px;transform:scaleX(0.9900);color:#111;">ALI</span>
<span class="t dr" style="left:1322.00px;top:420px;font-size:10.7px;transform:scaleX(0.9509);color:#111;">BIS</span>
<span class="t dr" style="left:1383.50px;top:420px;font-size:10.7px;transform:scaleX(0.8791);color:#111;">CRI</span>
<span class="t dr" style="left:1437.90px;top:420px;font-size:10.7px;transform:scaleX(0.9397);color:#111;">CRS-G</span>
<span class="t dr" style="left:1509.60px;top:420px;font-size:10.7px;transform:scaleX(0.8855);color:#111;">FOR</span>
<div class="b" style="left:1040px;top:441px;width:533px;height:2px;background:#2f9a6c;"></div>
<div class="b" style="left:1233px;top:442px;width:2px;height:444px;background:#2f9a6c;"></div>
<svg class="b" style="left:1045.6px;top:447.2px;" width="10.5" height="10.5" viewBox="0 0 10.5 10.5"><rect x="0.5" y="0.5" width="9.5" height="9.5" fill="#fff" stroke="#8a8886" stroke-width="1"/><path d="M2.6 5.25 H7.9" stroke="#605e5c" stroke-width="1"/></svg>
<span class="t" style="left:1065.30px;top:447px;font-size:10.7px;transform:scaleX(0.9225);font-weight:700;color:#000;">Seguros de Fianzas</span>
<svg class="b" style="left:1045.6px;top:686.7px;" width="10.5" height="10.5" viewBox="0 0 10.5 10.5"><rect x="0.5" y="0.5" width="9.5" height="9.5" fill="#fff" stroke="#8a8886" stroke-width="1"/><path d="M2.6 5.25 H7.9" stroke="#605e5c" stroke-width="1"/></svg>
<span class="t" style="left:1065.30px;top:687px;font-size:10.7px;transform:scaleX(0.9310);font-weight:700;color:#000;">Seguros Generales</span>
<span class="t dr" style="left:1071.00px;top:466px;font-size:10.7px;transform:scaleX(0.9798);color:#111;">Buena ejecución de obra</span>
<span class="t dr" style="left:1263.97px;top:466px;font-size:11px;transform:scaleX(0.9250);color:#111;"><span style="letter-spacing:1.6px">-</span>5.035</span>
<span class="t dr" style="left:1395.65px;top:466px;font-size:11px;transform:scaleX(0.9250);color:#111;"><span style="letter-spacing:1.6px">-</span>496</span>
<span class="t dr" style="left:1531.42px;top:466px;font-size:11px;transform:scaleX(0.9250);color:#111;">227</span>
<span class="t dr" style="left:1071.00px;top:482px;font-size:10.7px;color:#111;">Créditos</span>
<span class="t dr" style="left:1401.31px;top:482px;font-size:11px;transform:scaleX(0.9250);color:#111;"><span style="letter-spacing:1.6px">-</span>21</span>
<span class="t dr" style="left:1531.42px;top:482px;font-size:11px;transform:scaleX(0.9250);color:#111;">551</span>
<span class="t dr" style="left:1071.00px;top:499px;font-size:10.7px;transform:scaleX(0.9867);color:#111;">Cumplimiento de Obligaciones</span>
<span class="t dr" style="left:1071.00px;top:511px;font-size:10.7px;transform:scaleX(0.9834);color:#111;">Aduaneras</span>
<span class="t dr" style="left:1272.45px;top:499px;font-size:11px;transform:scaleX(0.9250);color:#111;"><span style="letter-spacing:1.6px">-</span>453</span>
<span class="t dr" style="left:1392.79px;top:499px;font-size:11px;transform:scaleX(0.9250);color:#111;">1.117</span>
<span class="t dr" style="left:1531.42px;top:499px;font-size:11px;transform:scaleX(0.9250);color:#111;">141</span>
<span class="t dr" style="left:1071.00px;top:528px;font-size:10.7px;transform:scaleX(0.9867);color:#111;">Cumplimiento de Obligaciones</span>
<span class="t dr" style="left:1071.00px;top:541px;font-size:10.7px;transform:scaleX(0.9948);color:#111;">Legales y Contractuales de</span>
<span class="t dr" style="left:1071.00px;top:553px;font-size:10.7px;transform:scaleX(0.9911);color:#111;">Telecomunicaciones</span>
<span class="t dr" style="left:1268.84px;top:528px;font-size:11px;transform:scaleX(0.9250);color:#111;">2.271</span>
<span class="t dr" style="left:1400.52px;top:528px;font-size:11px;transform:scaleX(0.9250);color:#111;">310</span>
<span class="t dr" style="left:1531.42px;top:528px;font-size:11px;transform:scaleX(0.9250);color:#111;">727</span>
<span class="t dr" style="left:1071.00px;top:569px;font-size:10.7px;color:#111;">Cumplimiento de obra</span>
<span class="t dr" style="left:1263.18px;top:569px;font-size:11px;transform:scaleX(0.9250);color:#111;">10.906</span>
<span class="t dr" style="left:1343.57px;top:569px;font-size:11px;transform:scaleX(0.9250);color:#111;"><span style="letter-spacing:1.6px">-</span>9</span>
<span class="t dr" style="left:1381.51px;top:569px;font-size:11px;transform:scaleX(0.9250);color:#111;"><span style="letter-spacing:1.6px">-</span>62.518</span>
<span class="t dr" style="left:1522.94px;top:569px;font-size:11px;transform:scaleX(0.9250);color:#111;">9.742</span>
<span class="t dr" style="left:1071.00px;top:586px;font-size:10.7px;transform:scaleX(1.0098);color:#111;">Cumplimiento de servicios</span>
<span class="t dr" style="left:1268.84px;top:586px;font-size:11px;transform:scaleX(0.9250);color:#111;">5.761</span>
<span class="t dr" style="left:1400.52px;top:586px;font-size:11px;transform:scaleX(0.9250);color:#111;">630</span>
<span class="t dr" style="left:1522.94px;top:586px;font-size:11px;transform:scaleX(0.9250);color:#111;">2.795</span>
<span class="t dr" style="left:1071.00px;top:603px;font-size:10.7px;transform:scaleX(1.0170);color:#111;">Cumplimiento de suministros</span>
<span class="t dr" style="left:1268.84px;top:603px;font-size:11px;transform:scaleX(0.9250);color:#111;">7.700</span>
<span class="t dr" style="left:1392.04px;top:603px;font-size:11px;transform:scaleX(0.9250);color:#111;">1.236</span>
<span class="t dr" style="left:1531.42px;top:603px;font-size:11px;transform:scaleX(0.9250);color:#111;">715</span>
<span class="t dr" style="left:1071.00px;top:620px;font-size:10.7px;transform:scaleX(0.9875);color:#111;">Fidelidad de empleados</span>
<span class="t dr" style="left:1263.97px;top:620px;font-size:11px;transform:scaleX(0.9250);color:#111;"><span style="letter-spacing:1.6px">-</span>2.776</span>
<span class="t dr" style="left:1337.88px;top:620px;font-size:11px;transform:scaleX(0.9250);color:#111;">117</span>
<span class="t dr" style="left:1401.31px;top:620px;font-size:11px;transform:scaleX(0.9250);color:#111;"><span style="letter-spacing:1.6px">-</span>32</span>
<span class="t dr" style="left:1537.08px;top:620px;font-size:11px;transform:scaleX(0.9250);color:#111;">30</span>
<span class="t dr" style="left:1071.00px;top:636px;font-size:10.7px;color:#111;">Inversión de anticipos</span>
<span class="t dr" style="left:1263.97px;top:636px;font-size:11px;transform:scaleX(0.9250);color:#111;"><span style="letter-spacing:1.6px">-</span>4.337</span>
<span class="t dr" style="left:1386.38px;top:636px;font-size:11px;transform:scaleX(0.9250);color:#111;">12.554</span>
<span class="t dr" style="left:1522.94px;top:636px;font-size:11px;transform:scaleX(0.9250);color:#111;">9.471</span>
<span class="t dr" style="left:1071.00px;top:653px;font-size:10.7px;transform:scaleX(0.9882);color:#111;">Seriedad de propuesta</span>
<span class="t dr" style="left:1268.84px;top:653px;font-size:11px;transform:scaleX(0.9250);color:#111;">2.770</span>
<span class="t dr" style="left:1395.65px;top:653px;font-size:11px;transform:scaleX(0.9250);color:#111;"><span style="letter-spacing:1.6px">-</span>519</span>
<span class="t dr" style="left:1531.42px;top:653px;font-size:11px;transform:scaleX(0.9250);color:#111;">694</span>
<span class="t dr" style="left:1071.00px;top:706px;font-size:10.7px;transform:scaleX(0.9966);color:#111;">Accidentes personales</span>
<span class="t dr" style="left:1263.97px;top:706px;font-size:11px;transform:scaleX(0.9250);color:#111;"><span style="letter-spacing:1.6px">-</span>3.730</span>
<span class="t dr" style="left:1322.98px;top:706px;font-size:11px;transform:scaleX(0.9250);color:#111;">51.205</span>
<span class="t dr" style="left:1386.38px;top:706px;font-size:11px;transform:scaleX(0.9250);color:#111;">21.960</span>
<span class="t dr" style="left:1522.94px;top:706px;font-size:11px;transform:scaleX(0.9250);color:#111;">4.525</span>
<span class="t dr" style="left:1071.00px;top:722px;font-size:10.7px;transform:scaleX(0.9762);color:#111;">Aeronavegación</span>
<span class="t dr" style="left:1071.00px;top:739px;font-size:10.7px;transform:scaleX(1.0204);color:#111;">Automotores</span>
<span class="t dr" style="left:1268.84px;top:739px;font-size:11px;transform:scaleX(0.9250);color:#111;">1.922</span>
<span class="t dr" style="left:1322.98px;top:739px;font-size:11px;transform:scaleX(0.9250);color:#111;">79.224</span>
<span class="t dr" style="left:1386.38px;top:739px;font-size:11px;transform:scaleX(0.9250);color:#111;">15.041</span>
<span class="t dr" style="left:1511.62px;top:739px;font-size:11px;transform:scaleX(0.9250);color:#111;">123.554</span>
<span class="t dr" style="left:1071.00px;top:756px;font-size:10.7px;transform:scaleX(0.9900);color:#111;">Incendio y aliados</span>
<span class="t dr" style="left:1257.52px;top:756px;font-size:11px;transform:scaleX(0.9250);color:#111;">327.045</span>
<span class="t dr" style="left:1317.32px;top:756px;font-size:11px;transform:scaleX(0.9250);color:#111;">101.523</span>
<span class="t dr" style="left:1381.51px;top:756px;font-size:11px;transform:scaleX(0.9250);color:#111;"><span style="letter-spacing:1.6px">-</span>35.738</span>
<span class="t dr" style="left:1443.01px;top:756px;font-size:11px;transform:scaleX(0.9250);color:#111;"><span style="letter-spacing:1.6px">-</span>40.468</span>
<span class="t dr" style="left:1517.28px;top:756px;font-size:11px;transform:scaleX(0.9250);color:#111;">66.448</span>
<span class="t dr" style="left:1071.00px;top:773px;font-size:10.7px;transform:scaleX(0.9879);color:#111;">Ramos técnicos</span>
<span class="t dr" style="left:1263.18px;top:773px;font-size:11px;transform:scaleX(0.9250);color:#111;">32.443</span>
<span class="t dr" style="left:1322.98px;top:773px;font-size:11px;transform:scaleX(0.9250);color:#111;">53.306</span>
<span class="t dr" style="left:1381.51px;top:773px;font-size:11px;transform:scaleX(0.9250);color:#111;"><span style="letter-spacing:1.6px">-</span>38.296</span>
<span class="t dr" style="left:1517.28px;top:773px;font-size:11px;transform:scaleX(0.9250);color:#111;">32.732</span>
<span class="t dr" style="left:1071.00px;top:789px;font-size:10.7px;color:#111;">Responsabilidad civil</span>
<span class="t dr" style="left:1257.52px;top:789px;font-size:11px;transform:scaleX(0.9250);color:#111;">125.161</span>
<span class="t dr" style="left:1322.98px;top:789px;font-size:11px;transform:scaleX(0.9250);color:#111;">26.012</span>
<span class="t dr" style="left:1387.17px;top:789px;font-size:11px;transform:scaleX(0.9250);color:#111;"><span style="letter-spacing:1.6px">-</span>2.922</span>
<span class="t dr" style="left:1522.94px;top:789px;font-size:11px;transform:scaleX(0.9250);color:#111;">4.592</span>
<span class="t dr" style="left:1071.00px;top:806px;font-size:10.7px;color:#111;">Riesgos varios misceláneos</span>
<span class="t dr" style="left:1268.84px;top:806px;font-size:11px;transform:scaleX(0.9250);color:#111;">4.155</span>
<span class="t dr" style="left:1322.98px;top:806px;font-size:11px;transform:scaleX(0.9250);color:#111;">31.105</span>
<span class="t dr" style="left:1381.51px;top:806px;font-size:11px;transform:scaleX(0.9250);color:#111;"><span style="letter-spacing:1.6px">-</span>59.986</span>
<span class="t dr" style="left:1522.94px;top:806px;font-size:11px;transform:scaleX(0.9250);color:#111;">2.088</span>
<span class="t dr" style="left:1071.00px;top:823px;font-size:10.7px;transform:scaleX(0.9382);color:#111;">Robo</span>
<span class="t dr" style="left:1268.84px;top:823px;font-size:11px;transform:scaleX(0.9250);color:#111;">5.568</span>
<span class="t dr" style="left:1071.00px;top:840px;font-size:10.7px;transform:scaleX(0.9847);color:#111;">Salud o enfermedad</span>
<span class="t dr" style="left:1252.65px;top:840px;font-size:11px;transform:scaleX(0.9250);color:#111;"><span style="letter-spacing:1.6px">-</span>147.319</span>
<span class="t dr" style="left:1312.45px;top:840px;font-size:11px;transform:scaleX(0.9250);color:#111;"><span style="letter-spacing:1.6px">-</span>128.254</span>
<span class="t dr" style="left:1071.00px;top:856px;font-size:10.7px;transform:scaleX(1.0107);color:#111;">Transportes</span>
<span class="t dr" style="left:1259.06px;top:856px;font-size:11px;transform:scaleX(0.9250);color:#111;"><span style="letter-spacing:1.6px">-</span>30.110</span>
<span class="t dr" style="left:1322.98px;top:856px;font-size:11px;transform:scaleX(0.9250);color:#111;">73.161</span>
<span class="t dr" style="left:1381.51px;top:856px;font-size:11px;transform:scaleX(0.9250);color:#111;"><span style="letter-spacing:1.6px">-</span>47.685</span>
<span class="t dr" style="left:1517.28px;top:856px;font-size:11px;transform:scaleX(0.9250);color:#111;">22.043</span>
<svg class="b" style="left:1690px;top:181px;" width="13" height="12" viewBox="0 0 13 12"><path d="M6 0.7 L0.9 6 L6 11.3 M12 0.7 L6.9 6 L12 11.3" fill="none" stroke="#3b3a39" stroke-width="1.4"/></svg>
<svg class="b" style="left:1691.5px;top:209px;" width="13" height="13" viewBox="0 0 13 13"><path d="M12 0.9 V12.3 L6.4 8.2 H0.9 V5 H6.4 Z" fill="none" stroke="#3b3a39" stroke-width="1.25" stroke-linejoin="round"/></svg>
<span class="t" style="left:1703.9px;top:230.3px;font-size:15.6px;color:#252423;-webkit-text-stroke:0.3px #252423;transform-origin:0 0;transform:rotate(90deg) scaleX(0.9890);">Filters</span>
<svg class="b" style="left:1904.8px;top:181px;" width="13" height="12" viewBox="0 0 13 12"><path d="M6 0.7 L0.9 6 L6 11.3 M12 0.7 L6.9 6 L12 11.3" fill="none" stroke="#3b3a39" stroke-width="1.4"/></svg>
<span class="t" style="left:1916.6px;top:208.8px;font-size:15.6px;color:#252423;-webkit-text-stroke:0.3px #252423;transform-origin:0 0;transform:rotate(90deg) scaleX(0.9650);">Data</span>
<span class="t" style="left:1721.30px;top:180px;font-size:15.6px;transform:scaleX(1.0347);color:#252423;-webkit-text-stroke:0.35px #252423;">Visualizations</span>
<svg class="b" style="left:1872.6px;top:181px;" width="13" height="12" viewBox="0 0 13 12"><path d="M0.9 0.7 L6 6 L0.9 11.3 M6.9 0.7 L12 6 L6.9 11.3" fill="none" stroke="#3b3a39" stroke-width="1.4"/></svg>
<span class="t" style="left:1721.30px;top:208px;font-size:12px;transform:scaleX(1.0132);color:#252423;-webkit-text-stroke:0.3px #252423;">Build visual</span>
<div class="b" style="left:1721px;top:225px;width:32px;height:32px;background:#d2d0ce;border-radius:2px;"></div>
<svg class="b" style="left:1725px;top:228px;" width="24" height="26" viewBox="0 0 24 26"><path d="M0.5 1.5 H19" stroke="#3b3a39" stroke-width="1" fill="none"/><rect x="0.8" y="5.3" width="22.4" height="8" fill="#117865" stroke="#1b1a19" stroke-width="1" stroke-dasharray="1.5 1"/><rect x="0.8" y="16.3" width="22.4" height="8" fill="#117865" stroke="#1b1a19" stroke-width="1" stroke-dasharray="1.5 1"/></svg>
<svg class="b" style="left:1790px;top:228px;" width="26" height="26" viewBox="0 0 26 26"><path d="M0.8 24.5 V1 H12 L17 6 V9" fill="none" stroke="#3b3a39" stroke-width="1.1"/><path d="M12 1 V6 H17 M0.8 24.5 H5" fill="none" stroke="#3b3a39" stroke-width="1.1"/><path d="M24.3 9.8 L14 20.2" stroke="#3b3a39" stroke-width="1.6" fill="none"/><path d="M13.8 18.2 C10.5 18.5 10.5 23 6.5 23.5 C10 25.5 15.5 24.5 15.6 20.2 Z" fill="#fafafa" stroke="#3b3a39" stroke-width="1.1"/></svg>
<svg class="b" style="left:1713px;top:261px;" width="180" height="9" viewBox="0 0 180 9"><path d="M0 8.5 H16.5 L24 1.2 L31.5 8.5 H180" fill="none" stroke="#8a8886" stroke-width="1"/></svg>
<svg class="b" style="left:1724px;top:281px;" width="18" height="18" viewBox="0 0 18 18"><path d="M0.5 0 V17.5 H18" fill="none" stroke="#3b3a39" stroke-width="1"/><rect x="0.5" y="2.5" width="5" height="4" fill="#fff" stroke="#3b3a39" stroke-width="1"/><rect x="5.5" y="2.5" width="6.5" height="4" fill="#8cc0eb" stroke="#1a7ad4" stroke-width="1"/><rect x="0.5" y="10.5" width="7" height="4" fill="#fff" stroke="#3b3a39" stroke-width="1"/><rect x="7.5" y="10.5" width="8" height="4" fill="#c8c6c4" stroke="#8a8886" stroke-width="1"/></svg>
<svg class="b" style="left:1752px;top:281px;" width="18" height="18" viewBox="0 0 18 18"><path d="M0.5 0 V17.5 H18" fill="none" stroke="#3b3a39" stroke-width="1"/><rect x="3.5" y="11.5" width="4" height="6" fill="#fff" stroke="#3b3a39" stroke-width="1"/><rect x="3.5" y="5.5" width="4" height="6" fill="#8cc0eb" stroke="#1a7ad4" stroke-width="1"/><rect x="11.5" y="9.5" width="4" height="8" fill="#fff" stroke="#3b3a39" stroke-width="1"/><rect x="11.5" y="2.5" width="4" height="7" fill="#c8c6c4" stroke="#8a8886" stroke-width="1"/></svg>
<svg class="b" style="left:1780px;top:281px;" width="18" height="18" viewBox="0 0 18 18"><path d="M0.5 0 V17.5 H18" fill="none" stroke="#3b3a39" stroke-width="1.6"/><rect x="1" y="1" width="16" height="3.5" fill="#8cc0eb" stroke="#1a7ad4" stroke-width="1"/><rect x="1" y="5.5" width="9" height="3" fill="#fff" stroke="#3b3a39" stroke-width="1"/><rect x="1" y="9.5" width="7" height="2.5" fill="#c8c6c4" stroke="#8a8886" stroke-width="1"/><rect x="1" y="13" width="12" height="3.5" fill="#fff" stroke="#3b3a39" stroke-width="1"/></svg>
<svg class="b" style="left:1808px;top:281px;" width="18" height="18" viewBox="0 0 18 18"><path d="M0.5 0 V17.5 H18" fill="none" stroke="#3b3a39" stroke-width="1.6"/><rect x="1.5" y="1" width="4" height="16.5" fill="#8cc0eb" stroke="#1a7ad4" stroke-width="1"/><rect x="6.5" y="7.5" width="3" height="10" fill="#fff" stroke="#3b3a39" stroke-width="1"/><rect x="10" y="10.5" width="3" height="7" fill="#c8c6c4" stroke="#8a8886" stroke-width="1"/><rect x="13.5" y="4.5" width="3.5" height="13" fill="#fff" stroke="#3b3a39" stroke-width="1"/></svg>
<svg class="b" style="left:1836px;top:281px;" width="18" height="18" viewBox="0 0 18 18"><path d="M0.5 0 V17.5 H18" fill="none" stroke="#3b3a39" stroke-width="1"/><rect x="0.5" y="2.5" width="3.5" height="4" fill="#fff" stroke="#3b3a39" stroke-width="1"/><rect x="4" y="2.5" width="11" height="4" fill="#8cc0eb" stroke="#1a7ad4" stroke-width="1"/><rect x="0.5" y="10.5" width="10" height="4" fill="#fff" stroke="#3b3a39" stroke-width="1"/><rect x="10.5" y="10.5" width="4.5" height="4" fill="#c8c6c4" stroke="#8a8886" stroke-width="1"/></svg>
<svg class="b" style="left:1864px;top:281px;" width="18" height="18" viewBox="0 0 18 18"><path d="M0.5 0 V17.5 H18" fill="none" stroke="#3b3a39" stroke-width="1"/><rect x="3.5" y="13.5" width="4" height="4" fill="#fff" stroke="#3b3a39" stroke-width="1"/><rect x="3.5" y="2.5" width="4" height="11" fill="#8cc0eb" stroke="#1a7ad4" stroke-width="1"/><rect x="11.5" y="7.5" width="4" height="10" fill="#fff" stroke="#3b3a39" stroke-width="1"/><rect x="11.5" y="2.5" width="4" height="5" fill="#c8c6c4" stroke="#8a8886" stroke-width="1"/></svg>
<svg class="b" style="left:1724px;top:309px;" width="18" height="18" viewBox="0 0 18 18"><path d="M0.5 0 V17.5 H18" fill="none" stroke="#3b3a39" stroke-width="1"/><path d="M1 14 L6 8 L9 10.5 L12 6 L14.5 9 L17.5 5.5" fill="none" stroke="#1a7ad4" stroke-width="1.2" /><path d="M1 11 L5.5 5.5 L9 8.5 L11.5 5 L14 7.5 L17.5 3" fill="none" stroke="#3b3a39" stroke-width="1.1" /></svg>
<svg class="b" style="left:1752px;top:309px;" width="18" height="18" viewBox="0 0 18 18"><path d="M11 6 L14 1.5 L17.5 9.5 V17.5 H11 Z" fill="#c8c6c4" stroke="#8a8886" stroke-width="1" /><path d="M0.5 10 L7 2.5 L11 8" fill="#fff" stroke="#3b3a39" stroke-width="1" /><path d="M0.5 12 L4.5 15 L10.5 8 L17.5 17.5 H0.5 Z" fill="#8cc0eb" stroke="#1a7ad4" stroke-width="1.2" /></svg>
<svg class="b" style="left:1780px;top:309px;" width="18" height="18" viewBox="0 0 18 18"><path d="M0.5 0 V17.5 H18" fill="none" stroke="#3b3a39" stroke-width="1"/><path d="M1 3.5 L6.5 9.5 L11.5 4 L17.5 8.5 V13 L11.5 9.5 L6.5 14.5 L1 9 Z" fill="#8cc0eb" stroke="#1a7ad4" stroke-width="1.2" /></svg>
<svg class="b" style="left:1808px;top:309px;" width="18" height="18" viewBox="0 0 18 18"><path d="M0.5 0 V17.5 H18" fill="none" stroke="#3b3a39" stroke-width="1"/><path d="M1 2.5 H17.5 V11.5 L12 7.5 L6.5 13.5 L1 8.5 Z" fill="#8cc0eb" stroke="#1a7ad4" stroke-width="1.2" /></svg>
<svg class="b" style="left:1836px;top:309px;" width="18" height="18" viewBox="0 0 18 18"><path d="M0.5 0 V17.5 H18" fill="none" stroke="#3b3a39" stroke-width="1"/><rect x="3.5" y="2.5" width="4" height="8" fill="#8cc0eb" stroke="#1a7ad4" stroke-width="1"/><rect x="3.5" y="10.5" width="4" height="7" fill="#fff" stroke="#3b3a39" stroke-width="1"/><rect x="11.5" y="2.5" width="4" height="5" fill="#c8c6c4" stroke="#8a8886" stroke-width="1"/><rect x="11.5" y="7.5" width="4" height="10" fill="#fff" stroke="#3b3a39" stroke-width="1"/><path d="M1 16 L5.5 9.5 L10.5 13.5 L17.5 5" fill="none" stroke="#3b3a39" stroke-width="1.3" /></svg>
<svg class="b" style="left:1864px;top:309px;" width="18" height="18" viewBox="0 0 18 18"><path d="M0.5 0 V17.5 H18" fill="none" stroke="#3b3a39" stroke-width="1"/><rect x="3" y="8.5" width="4.5" height="9" fill="#8cc0eb" stroke="#1a7ad4" stroke-width="1"/><rect x="7.5" y="1.5" width="4" height="16" fill="#fff" stroke="#3b3a39" stroke-width="1"/><rect x="11.5" y="5.5" width="4" height="12" fill="#c8c6c4" stroke="#8a8886" stroke-width="1"/><path d="M1 16 L6 9.5 L10.5 13.5 L17.5 5" fill="none" stroke="#3b3a39" stroke-width="1.3" /></svg>
<svg class="b" style="left:1724px;top:337px;" width="18" height="18" viewBox="0 0 18 18"><path d="M0.5 0 V17.5 H18" fill="none" stroke="#3b3a39" stroke-width="1"/><path d="M1 2.5 C5 2.5 6 6 9 6 C12 6 13 2.5 17 2.5 V6.5 C13 6.5 12 10 9 10 C6 10 5 6.5 1 6.5 Z" fill="#a19f9d" stroke="#7a7876" stroke-width="0.8" /><rect x="2.5" y="11" width="3.5" height="3.5" fill="#f2a23a" stroke="#d9730d" stroke-width="0.8"/><rect x="12.5" y="11" width="3.5" height="3.5" fill="#f2a23a" stroke="#d9730d" stroke-width="0.8"/><rect x="7.5" y="7.5" width="3" height="2.5" fill="#f2a23a" stroke="#d9730d" stroke-width="0.8"/><path d="M1 8 C5 8 6 12.5 9 12.5 C12 12.5 13 8 17 8 V11 C13 11 12 15.5 9 15.5 C6 15.5 5 11 1 11 Z" fill="#8cc0eb" stroke="#1a7ad4" stroke-width="1.2" /></svg>
<svg class="b" style="left:1752px;top:337px;" width="18" height="18" viewBox="0 0 18 18"><path d="M0.5 0 V17.5 H18" fill="none" stroke="#3b3a39" stroke-width="1"/><rect x="2.5" y="6.5" width="3" height="11" fill="#fff" stroke="#3b3a39" stroke-width="1"/><rect x="6.5" y="6.5" width="3" height="4" fill="#c8c6c4" stroke="#8a8886" stroke-width="1"/><rect x="10" y="1.5" width="2.5" height="9" fill="#8cc0eb" stroke="#1a7ad4" stroke-width="1"/><rect x="13.5" y="1.5" width="3" height="16" fill="#fff" stroke="#3b3a39" stroke-width="1"/></svg>
<svg class="b" style="left:1780px;top:337px;" width="18" height="18" viewBox="0 0 18 18"><rect x="0.5" y="1.5" width="17" height="4.5" fill="#8cc0eb" stroke="#1a7ad4" stroke-width="1.2"/><rect x="2.5" y="6" width="13" height="4.5" fill="#8cc0eb" stroke="#1a7ad4" stroke-width="1.2"/><rect x="5.5" y="10.5" width="7" height="5.5" fill="#8cc0eb" stroke="#1a7ad4" stroke-width="1.2"/></svg>
<svg class="b" style="left:1808px;top:337px;" width="18" height="18" viewBox="0 0 18 18"><path d="M0.5 0 V17.5 H18" fill="none" stroke="#3b3a39" stroke-width="1"/><rect x="13.5" y="2" width="2.5" height="2.5" fill="#3b3a39" stroke="#3b3a39" stroke-width="0.5"/><rect x="3.5" y="12.5" width="2.5" height="2.5" fill="#3b3a39" stroke="#3b3a39" stroke-width="0.5"/><rect x="3.5" y="4.5" width="2.5" height="2.5" fill="#8cc0eb" stroke="#8cc0eb" stroke-width="0.5"/><rect x="8.5" y="7.5" width="2.5" height="2.5" fill="#8cc0eb" stroke="#8cc0eb" stroke-width="0.5"/><rect x="13.5" y="11.5" width="2.5" height="2.5" fill="#8cc0eb" stroke="#8cc0eb" stroke-width="0.5"/></svg>
<svg class="b" style="left:1836px;top:337px;" width="18" height="18" viewBox="0 0 18 18"><circle cx="9" cy="9.2" r="8.4" fill="#fff" stroke="#3b3a39" stroke-width="1.1"/><path d="M8.5 0.8 A8.4 8.4 0 0 1 15.2 14.8 L8.5 9.2 Z" fill="#8cc0eb" stroke="#1a7ad4" stroke-width="1.2" /></svg>
<svg class="b" style="left:1864px;top:337px;" width="18" height="18" viewBox="0 0 18 18"><circle cx="9" cy="9.2" r="6.3" fill="none" stroke="#1a7ad4" stroke-width="4.6"/><circle cx="9" cy="9.2" r="6.3" fill="none" stroke="#8cc0eb" stroke-width="2.8"/><path d="M9 0.6 A8.6 8.6 0 0 0 0.4 9.2 H4.5 A4.5 4.5 0 0 1 9 4.7 Z" fill="#f3f2f1" stroke="#9a9896" stroke-width="1" /></svg>
<svg class="b" style="left:1724px;top:365px;" width="18" height="18" viewBox="0 0 18 18"><rect x="0.5" y="0.5" width="17" height="17" fill="#fff" stroke="#3b3a39" stroke-width="1"/><rect x="0.5" y="0.5" width="8.5" height="9.5" fill="#8cc0eb" stroke="#1a7ad4" stroke-width="1.2"/><rect x="0.5" y="10" width="8.5" height="7.5" fill="#8cc0eb" stroke="#1a7ad4" stroke-width="1.2"/><path d="M9 6.5 H17.5 M13.5 6.5 V17.5 M13.5 12 H17.5" fill="none" stroke="#3b3a39" stroke-width="1" /></svg>
<svg class="b" style="left:1752px;top:365px;" width="18" height="18" viewBox="0 0 18 18"><circle cx="9" cy="8" r="5.6" fill="#fff" stroke="#3b3a39" stroke-width="1.1"/><path d="M5 6 C6 4 8 3.4 9.4 4.2 L8.4 6.4 L10 8.4 L8.6 11.6 C6.4 11.6 4.6 9 5 6 Z M11.4 4.6 C13.4 5.6 14 8 13 10.4 L11.2 9 L11.8 6.6 Z" fill="#2e9e46" stroke="none" stroke-width="0" /><path d="M13.5 1.2 A8.2 8.2 0 1 0 15.6 12.6" fill="none" stroke="#3b3a39" stroke-width="1.1" /><path d="M9 15.8 V17.2 M5.5 17.5 H12.5" fill="none" stroke="#3b3a39" stroke-width="1.1" /></svg>
<svg class="b" style="left:1780px;top:365px;" width="18" height="18" viewBox="0 0 18 18"><path d="M0.8 1.5 H7 L8.5 3.5 L11 1.5 H17.2 V8 L13 13 L9 16 L5 13.5 L1.5 10.5 Z" fill="#c8c6c4" stroke="#3b3a39" stroke-width="1" /><path d="M1 1.5 H5.5 L7.5 6.5 L4 9.5 L1 7 Z" fill="#8cc0eb" stroke="#1a7ad4" stroke-width="1" /><path d="M11 9 L17 8 L16 12 L12.5 15.5 L9.5 15 Z" fill="#8cc0eb" stroke="#1a7ad4" stroke-width="1" /></svg>
<svg class="b" style="left:1808px;top:365px;" width="18" height="18" viewBox="0 0 18 18"><path d="M10.5 0 L17.5 17.5 L10.5 12.5 Z" fill="#1374c8" stroke="none" stroke-width="0" /><path d="M10.5 0 L2 16.5 L10.5 12.5 Z" fill="#46a6d8" stroke="none" stroke-width="0" /></svg>
<svg class="b" style="left:1836px;top:365px;" width="18" height="18" viewBox="0 0 18 18"><path d="M1 13.5 A8 8 0 0 1 17 13.5 H13 A4 4 0 0 0 5 13.5 Z" fill="#fff" stroke="#3b3a39" stroke-width="1.1" /><path d="M9 5.5 A8 8 0 0 1 17 13.5 H13 A4 4 0 0 0 9 9.5 Z" fill="#8cc0eb" stroke="#1a7ad4" stroke-width="1.1" /><path d="M8 13.5 L12.5 9.5" fill="none" stroke="#3b3a39" stroke-width="1.8" /><circle cx="8.5" cy="13" r="1.3" fill="#3b3a39"/></svg>
<svg class="b" style="left:1864px;top:365px;" width="18" height="18" viewBox="0 0 18 18"><rect x="0.5" y="2.5" width="17" height="13.4" fill="#fff" stroke="#3b3a39" stroke-width="1"/><path d="M2.5 14 H15.5" fill="none" stroke="#8a8886" stroke-width="0.9" /></svg>
<svg class="b" style="left:1724px;top:393px;" width="18" height="18" viewBox="0 0 18 18"><rect x="0.5" y="0.5" width="17" height="17" fill="#fff" stroke="#3b3a39" stroke-width="1.2"/><path d="M3.5 3.5 V14.5" fill="none" stroke="#3b3a39" stroke-width="0.9" /><path d="M5.5 5 H15 M5.5 11 H15" fill="none" stroke="#0f5fb0" stroke-width="2" /><path d="M5.5 8 H10.5 M5.5 14 H10.5" fill="none" stroke="#8a8886" stroke-width="0.9" /></svg>
<svg class="b" style="left:1752px;top:393px;" width="18" height="18" viewBox="0 0 18 18"><rect x="0.5" y="2" width="17" height="14" fill="#fff" stroke="#3b3a39" stroke-width="1"/><path d="M3.5 9.5 L6 5 L8.5 9.5 Z" fill="#7fd08a" stroke="#2e9e46" stroke-width="1.1" /><path d="M9.5 5 H14.5 L12 9.5 Z" fill="#f28b94" stroke="#e0323f" stroke-width="1.1" /><path d="M3 12.5 H15" fill="none" stroke="#8a8886" stroke-width="0.9" /></svg>
<svg class="b" style="left:1780px;top:393px;" width="18" height="18" viewBox="0 0 18 18"><rect x="0.5" y="1" width="17" height="15.5" fill="#fff" stroke="#3b3a39" stroke-width="1"/><rect x="0.5" y="1" width="17" height="2.5" fill="#c8c6c4" stroke="#3b3a39" stroke-width="1"/><rect x="3.5" y="6.5" width="3" height="3" fill="#fff" stroke="#8a8886" stroke-width="1.3"/><rect x="3.5" y="11.5" width="3" height="3" fill="#fff" stroke="#8a8886" stroke-width="1.3"/><path d="M9.5 10.5 H18.5 L15.5 14 V18.5 H12.5 V14 Z" fill="#fff" stroke="#3b3a39" stroke-width="1.1" /></svg>
<svg class="b" style="left:1808px;top:393px;" width="18" height="18" viewBox="0 0 18 18"><rect x="0.5" y="1.5" width="17" height="15.5" fill="#fff" stroke="#3b3a39" stroke-width="1"/><rect x="0.5" y="1.5" width="17" height="2" fill="#c8c6c4" stroke="#3b3a39" stroke-width="1"/><path d="M0.5 8.5 H17.5 M0.5 12.5 H17.5 M6.5 3.5 V17 M11.5 3.5 V17" fill="none" stroke="#605e5c" stroke-width="1" /><rect x="0.5" y="1.5" width="17" height="15.5" fill="none" stroke="#3b3a39" stroke-width="1"/></svg>
<svg class="b" style="left:1836px;top:393px;" width="18" height="18" viewBox="0 0 18 18"><rect x="0.5" y="1.5" width="17" height="15.5" fill="#fff" stroke="#3b3a39" stroke-width="1"/><rect x="11.5" y="3.5" width="6" height="9" fill="#8cc0eb" stroke="#8cc0eb" stroke-width="0.1"/><rect x="0.5" y="12.5" width="17" height="4.5" fill="#8cc0eb" stroke="#8cc0eb" stroke-width="0.1"/><rect x="0.5" y="1.5" width="17" height="2" fill="#c8c6c4" stroke="#3b3a39" stroke-width="1"/><path d="M0.5 8.5 H11.5 M6.5 3.5 V12.5" fill="none" stroke="#605e5c" stroke-width="1" /><path d="M11.5 8.5 H17.5 M6.5 12.5 V17 M11.5 12.5 V17" fill="none" stroke="#fff" stroke-width="1" /><path d="M11.5 3.5 V12.5 H0.5" fill="none" stroke="#1a7ad4" stroke-width="1" /><rect x="0.5" y="1.5" width="17" height="15.5" fill="none" stroke="#3b3a39" stroke-width="1"/></svg>
<svg class="b" style="left:1752px;top:421px;" width="18" height="18" viewBox="0 0 18 18"><path d="M0.5 0 V17.5 H18" fill="none" stroke="#3b3a39" stroke-width="1"/><path d="M1 4 H13 M1 9 H9.5 M1 13 H5.5" fill="none" stroke="#8a8886" stroke-width="1" /><path d="M1 4 H13" fill="none" stroke="#1a7ad4" stroke-width="1.1" /><circle cx="14.8" cy="4" r="2" fill="#8cc0eb" stroke="#1a7ad4"/><rect x="9.5" y="7.5" width="2.5" height="2.5" fill="#fff" stroke="#8a8886" stroke-width="1"/><rect x="5.5" y="11.5" width="2.5" height="2.5" fill="#fff" stroke="#8a8886" stroke-width="1"/></svg>
<svg class="b" style="left:1780px;top:421px;" width="18" height="18" viewBox="0 0 18 18"><path d="M4.5 9 H9.5 M9.5 3 V15 M9.5 3 H12 M9.5 9 H12 M9.5 15 H12" fill="none" stroke="#1a7ad4" stroke-width="1.1" /><rect x="0.5" y="7" width="4.5" height="4" fill="#8cc0eb" stroke="#1a7ad4" stroke-width="1"/><rect x="12" y="1" width="5.5" height="3.6" fill="#8cc0eb" stroke="#1a7ad4" stroke-width="1"/><rect x="12" y="7" width="5.5" height="3.6" fill="#8cc0eb" stroke="#1a7ad4" stroke-width="1"/><rect x="12" y="13" width="5.5" height="3.6" fill="#8cc0eb" stroke="#1a7ad4" stroke-width="1"/></svg>
<svg class="b" style="left:1808px;top:421px;" width="18" height="18" viewBox="0 0 18 18"><path d="M0.8 1.5 H17.2 V12.5 H8 L3.5 17 V12.5 H0.8 Z" fill="#fafafa" stroke="#1a7ad4" stroke-width="1.3" /></svg>
<svg class="b" style="left:1836px;top:421px;" width="18" height="18" viewBox="0 0 18 18"><path d="M3.5 0.8 H11.5 L15.5 4.8 V17.2 H3.5 Z" fill="#fafafa" stroke="#3b3a39" stroke-width="1.1" /><path d="M11.5 0.8 V4.8 H15.5" fill="none" stroke="#3b3a39" stroke-width="1" /><rect x="2" y="5.5" width="3" height="3" fill="#8cc0eb" stroke="#1a7ad4" stroke-width="1"/><path d="M7.5 8.5 H13 M7.5 11.5 H11" fill="none" stroke="#1a7ad4" stroke-width="1" /></svg>
<svg class="b" style="left:1864px;top:421px;" width="18" height="18" viewBox="0 0 18 18"><path d="M4.5 2 H13.5 V7 A4.5 4.5 0 0 1 4.5 7 Z" fill="#fafafa" stroke="#3b3a39" stroke-width="1.2" /><path d="M4.5 3.5 H1 V5 A3.5 3.5 0 0 0 4.5 8.5 M13.5 3.5 H17 V5 A3.5 3.5 0 0 1 13.5 8.5" fill="none" stroke="#3b3a39" stroke-width="1.1" /><path d="M9 11.5 V14.5 M6.5 14.5 H11.5" fill="none" stroke="#3b3a39" stroke-width="1.3" /><rect x="4.5" y="15.5" width="9" height="2" fill="#8cc0eb" stroke="#1a7ad4" stroke-width="1"/><path d="M4.5 2 H13.5" fill="none" stroke="#1a7ad4" stroke-width="1.6" /></svg>
<svg class="b" style="left:1724px;top:449px;" width="18" height="18" viewBox="0 0 18 18"><path d="M1.5 0.8 H11 L15.5 5.3 V18.7 H1.5 Z" fill="#fafafa" stroke="#3b3a39" stroke-width="1.3" /><path d="M11 0.8 V5.3 H15.5" fill="none" stroke="#3b3a39" stroke-width="1" /><path d="M5 17 V11.5 M8.8 17 V13.5 M12.5 17 V9" fill="none" stroke="#3b3a39" stroke-width="2.2" /></svg>
<svg class="b" style="left:1752px;top:449px;" width="18" height="18" viewBox="0 0 18 18"><rect x="2.5" y="4.5" width="15" height="11.5" fill="#fff" stroke="#3b3a39" stroke-width="1"/><path d="M4.5 14 H15.5" fill="none" stroke="#8a8886" stroke-width="0.9" /><path d="M4.4 -0.8 H9.4 L6.8 3.4 H9.8 L1.4 11.8 L4 5.6 H0.4 Z" fill="#f9bd52" stroke="#d9730d" stroke-width="0.9" stroke-linejoin="round"/></svg>
<svg class="b" style="left:1780px;top:449px;" width="18" height="18" viewBox="0 0 18 18"><rect x="2.5" y="1.5" width="15" height="14.5" fill="#fff" stroke="#3b3a39" stroke-width="1"/><rect x="2.5" y="1.5" width="15" height="2.5" fill="#c8c6c4" stroke="#3b3a39" stroke-width="1"/><rect x="5" y="7.5" width="2.6" height="2.6" fill="#fff" stroke="#8a8886" stroke-width="1.2"/><rect x="5" y="12" width="2.6" height="2.6" fill="#fff" stroke="#8a8886" stroke-width="1.2"/><path d="M9.5 10.5 H18.5 L15.5 14 V18.5 H12.5 V14 Z" fill="#fff" stroke="#3b3a39" stroke-width="1.1" /><path d="M4.4 -0.8 H9.4 L6.8 3.4 H9.8 L1.4 11.8 L4 5.6 H0.4 Z" fill="#f9bd52" stroke="#d9730d" stroke-width="0.9" stroke-linejoin="round"/></svg>
<svg class="b" style="left:1808px;top:449px;" width="18" height="18" viewBox="0 0 18 18"><rect x="1.5" y="2" width="16" height="15.5" fill="#fafafa" stroke="#1a7ad4" stroke-width="1.4"/><path d="M17 5 L13 6 L12 9.5 L9.5 10 L8.5 13.5 L9 17 H13 L13.5 13 L17 12.5 Z" fill="#8cc0eb" stroke="#1a7ad4" stroke-width="0.8" /><path d="M3 0.5 A2.8 2.8 0 0 1 5.8 3.5 V7 L3 10.5 L0.3 7 V3.5 A2.8 2.8 0 0 1 3 0.5 Z" fill="#d9730d" stroke="#d9730d" stroke-width="0.6" /><circle cx="3" cy="4" r="1" fill="#fff"/><circle cx="16" cy="16.5" r="2.4" fill="#d9730d"/><rect x="17" y="9.8" width="2" height="2" fill="#d9730d" stroke="#d9730d" stroke-width="0.3"/></svg>
<svg class="b" style="left:1836px;top:449px;" width="18" height="18" viewBox="0 0 18 18"><path d="M9 1.5 L17.3 10 L9 18.5 L0.7 10 Z" fill="none" stroke="#a33fbf" stroke-width="1.2" /><path d="M5 5.7 L13.3 14.2 M13 5.7 L4.7 14.2" fill="none" stroke="#a33fbf" stroke-width="1.1" /><path d="M9 5 L14 10 L9 15 L4 10 Z" fill="#f3f2f1" stroke="none" stroke-width="0" /><path d="M9 5.5 L13.5 10 L9 14.5 L4.5 10 Z M6.8 7.8 L11.2 12.2 M11.2 7.8 L6.8 12.2" fill="none" stroke="#c36ad8" stroke-width="1" /></svg>
<svg class="b" style="left:1864px;top:449px;" width="18" height="18" viewBox="0 0 18 18"><path d="M0.8 2.5 H11.5 L17.3 9.5 L11.5 16.5 H0.8 L6.8 9.5 Z" fill="#fafafa" stroke="#1b86ea" stroke-width="1.2" /><path d="M12.5 5.5 L5 14.5 M15 8.3 L9 15.8" fill="none" stroke="#1b86ea" stroke-width="1.1" /></svg>
<span class="t" style="left:1866.80px;top:370px;font-size:10.4px;transform:scaleX(0.7607);color:#1a7ad4;">123</span>
<span class="t" style="left:1867.20px;top:394px;font-size:17px;transform:scaleX(0.8797);font-weight:700;color:#1a7fd0;-webkit-text-stroke:0.4px #1a7fd0;">R</span>
<span class="t" style="left:1723.30px;top:421px;font-size:17px;transform:scaleX(0.9137);font-weight:700;color:#1a7fd0;-webkit-text-stroke:0.3px #1a7fd0;">Py</span>
<span class="t" style="left:1758.60px;top:455px;font-size:9.6px;transform:scaleX(0.7242);color:#1a7ad4;">123</span>
<div class="b" style="left:1725.6px;top:484px;width:2px;height:2px;background:#323130;"></div>
<div class="b" style="left:1731.6px;top:484px;width:2px;height:2px;background:#323130;"></div>
<div class="b" style="left:1737.6px;top:484px;width:2px;height:2px;background:#323130;"></div>
<div class="b" style="left:1713px;top:504px;width:180px;height:1px;background:#e1dfdd;"></div>
<span class="t" style="left:1725.50px;top:516px;font-size:12px;transform:scaleX(0.9301);color:#252423;">Values</span>
<div class="b" style="left:1717px;top:535.5px;width:170px;height:26.5px;background:#ffffff;border:1px dashed #c8c6c4;border-radius:2px;"></div>
<span class="t" style="left:1728.50px;top:544px;font-size:12px;transform:scaleX(0.9912);color:#252423;">Add data fields here</span>
<span class="t" style="left:1725.50px;top:576px;font-size:12px;transform:scaleX(1.0696);color:#252423;-webkit-text-stroke:0.2px #252423;">Drill through</span>
<span class="t" style="left:1725.50px;top:601px;font-size:12px;transform:scaleX(0.9868);color:#252423;">Cross-report</span>
<div class="b" style="left:1839px;top:599.2px;width:32px;height:15.8px;background:#ffffff;border:1px solid #605e5c;border-radius:8px;"></div>
<div class="b" style="left:1843.8px;top:603px;width:8.2px;height:8.2px;background:#605e5c;border-radius:50%;"></div>
<span class="t" style="left:1853.30px;top:603px;font-size:9px;transform:scaleX(1.0643);color:#605e5c;">Off</span>
<span class="t" style="left:1725.50px;top:628px;font-size:12px;transform:scaleX(0.9738);color:#252423;">Keep all filters</span>
<div class="b" style="left:1839px;top:626.2px;width:32px;height:15.8px;background:#117865;border-radius:8px;"></div>
<div class="b" style="left:1858.3px;top:630px;width:8.2px;height:8.2px;background:#ffffff;border-radius:50%;"></div>
<span class="t" style="left:1844.00px;top:631px;font-size:9px;transform:scaleX(0.9602);font-weight:700;color:#ffffff;">On</span>
<div class="b" style="left:1717px;top:652.3px;width:170px;height:25.5px;background:#ffffff;border:1px dashed #c8c6c4;border-radius:2px;"></div>
<span class="t" style="left:1726.00px;top:660px;font-size:12px;transform:scaleX(1.0248);color:#252423;">Add drill-through fields here</span>
<svg class="b" style="left:25px;top:17.5px;" width="16.5" height="16.5" viewBox="0 0 16.5 16.5"><path d="M0.9 0.9 H15.4 V15.7 H3.4 L0.9 13.2 Z M3.6 1 V6.6 H12.6 V1 M5 15.6 V10.6 H11.2 V15.6" fill="none" stroke="#d0cfcd" stroke-width="1.25" /></svg>
<svg class="b" style="left:55.5px;top:17.5px;" width="16" height="16.5" viewBox="0 0 16 16.5"><path d="M0.8 0.8 V7.4 H7.2 M1.2 7 C4 2.2 10.5 -0.5 13.6 4 C15.8 8 11.5 10.5 6.5 15.8" fill="none" stroke="#8a8886" stroke-width="1.2" /></svg>
<svg class="b" style="left:85px;top:17.5px;" width="16" height="16.5" viewBox="0 0 16 16.5"><path d="M15.2 0.8 V7.4 H8.8 M14.8 7 C12 2.2 5.5 -0.5 2.4 4 C0.2 8 4.5 10.5 9.5 15.8" fill="none" stroke="#8a8886" stroke-width="1.2" /></svg>
<svg class="b" style="left:388.5px;top:23.5px;" width="9" height="5" viewBox="0 0 9 5"><path d="M0 0 H8.6 L4.3 4.6 Z" fill="#ffffff"/></svg>
<svg class="b" style="left:886px;top:16px;" width="18" height="18" viewBox="0 0 18 18"><circle cx="11.5" cy="6.4" r="5.2" fill="none" stroke="#3b3a39" stroke-width="1.2"/><path d="M7.9 10.4 L1.6 16.8" fill="none" stroke="#3b3a39" stroke-width="1.4" /></svg>
<svg class="b" style="left:1761px;top:15px;" width="21" height="21" viewBox="0 0 21 21"><circle cx="10.2" cy="10.2" r="10" fill="#f6f5f4"/><circle cx="10.2" cy="5.6" r="2.7" fill="none" stroke="#252423" stroke-width="1.3"/><path d="M4.4 11.5 H16 C16 14.3 13.6 16.6 10.2 16.6 C6.8 16.6 4.4 14.3 4.4 11.5 Z" fill="none" stroke="#252423" stroke-width="1.3" stroke-linejoin="round"/></svg>
<div class="b" style="left:1813px;top:25px;width:10px;height:1px;background:#ffffff;"></div>
<div class="b" style="left:1857px;top:21px;width:10px;height:10px;border:1px solid #fff;border-radius:1px;"></div>
<svg class="b" style="left:1900.5px;top:20.5px;" width="11" height="11" viewBox="0 0 11 11"><path d="M0.5 0.5 L10.5 10.5 M10.5 0.5 L0.5 10.5" fill="none" stroke="#fff" stroke-width="1.1" /></svg>
<svg class="b" style="left:1844.5px;top:49.5px;" width="17" height="15" viewBox="0 0 17 15"><path d="M1 5.5 V14 H11.5 V11.5" fill="none" stroke="#fff" stroke-width="1.2" /><path d="M10 0.8 L15.8 5.6 L10 10.4 V7.6 C7 7.4 5 8.6 3.6 11 C3.9 6.6 6.2 3.9 10 3.6 Z" fill="none" stroke="#fff" stroke-width="1.2" stroke-linejoin="round"/></svg>
<svg class="b" style="left:1904px;top:55.5px;" width="10" height="7" viewBox="0 0 10 7"><path d="M0.6 0.6 L4.8 5.4 L9 0.6" fill="none" stroke="#fff" stroke-width="1.3" /></svg>
<svg class="b" style="left:24.5px;top:84.5px;" width="28" height="31" viewBox="0 0 28 31"><path d="M5 6.4 H2.5 V26.7 H12.2 M16.6 6.4 H19.3 V11" fill="none" stroke="#fdeccd" stroke-width="1.4" /><path d="M5 5.2 H1.2 V28 H12.2 M16.6 5.2 H20.6 V11" fill="none" stroke="#f4bf8e" stroke-width="1.1" /><path d="M4.9 8 V5 H7 C7 2.6 8.6 1 10.6 1 C12.6 1 14.2 2.6 14.2 5 H16.4 V8 Z" fill="#fafafa" stroke="#b5b3b1" stroke-width="1.1" /><rect x="14.2" y="13.2" width="12.8" height="16.6" rx="0" fill="#fafafa" stroke="#a9a7a5" stroke-width="1.3"/></svg>
<svg class="b" style="left:62.5px;top:81.5px;" width="11.5" height="17" viewBox="0 0 11.5 17"><path d="M3 0.6 L7.6 12 M8.4 0.6 L3.8 12" fill="none" stroke="#8f8d8b" stroke-width="1.1" /><rect x="0.8" y="12.2" width="3.4" height="3.4" rx="0" fill="#d5e9f7" stroke="#92c5ea" stroke-width="1"/><rect x="7.2" y="12.2" width="3.4" height="3.4" rx="0" fill="#d5e9f7" stroke="#92c5ea" stroke-width="1"/></svg>
<svg class="b" style="left:59.5px;top:105.5px;" width="17" height="17" viewBox="0 0 17 17"><path d="M6 12.6 H0.9 V0.9 H6.6 L8.2 2.4" fill="none" stroke="#a9a7a5" stroke-width="1.1" /><path d="M6.6 4.4 H12 L15.8 8.2 V15.8 H6.6 Z M12 4.4 V8.2 H15.8" fill="#fafafa" stroke="#a19f9d" stroke-width="1.1" /><path d="M9 10.8 H13.4 M9 13 H13.4" fill="none" stroke="#b5b3b1" stroke-width="1" /></svg>
<svg class="b" style="left:59.5px;top:129.5px;" width="17" height="16.5" viewBox="0 0 17 16.5"><g transform="translate(9.4,7.4) rotate(45)"><path d="M-3.6 0.2 H3.6 L4.6 7.6 L0 9.6 L-4.6 7.6 Z" fill="#fbe0c3" stroke="#f0b987" stroke-width="1.1" stroke-linejoin="round"/><rect x="-3.4" y="-2.6" width="6.8" height="2.8" fill="#fafafa" stroke="#8f8d8b" stroke-width="1"/><rect x="-1.4" y="-9" width="2.8" height="6.4" rx="1.2" fill="#fafafa" stroke="#8f8d8b" stroke-width="1"/></g></svg>
<svg class="b" style="left:185.5px;top:84.5px;" width="28" height="31" viewBox="0 0 28 31"><ellipse cx="11.1" cy="4.4" rx="10.2" ry="3.6" fill="none" stroke="#3b3a39" stroke-width="1.2"/><path d="M0.9 4.4 V24.2 C0.9 26 4.5 27.6 10.5 27.8 M21.3 4.4 V13.6" fill="none" stroke="#3b3a39" stroke-width="1.2" /><rect x="12" y="14.7" width="15" height="15" rx="0" fill="#fff" stroke="#605e5c" stroke-width="1.1"/><rect x="12" y="14.7" width="15" height="3.2" rx="0" fill="#c8c6c4" stroke="#3b3a39" stroke-width="1.0"/><path d="M12 21.8 H27 M12 25.8 H27 M17.0 17.9 V29.7 M22.0 17.9 V29.7" fill="none" stroke="#7a7876" stroke-width="1.0" /></svg>
<svg class="b" style="left:235.5px;top:84.5px;" width="28" height="31" viewBox="0 0 28 31"><path d="M11.5 28.0 H0.7 V0.8 H13.899999999999999 L20.9 7.8 V16 M13.899999999999999 0.8 V7.8 H20.9" fill="none" stroke="#7a7876" stroke-width="1.2" /><rect x="12.4" y="16.5" width="14" height="14" rx="0" fill="#107c41" stroke="#107c41" stroke-width="0.6"/></svg>
<span class="t" style="left:251.20px;top:103px;font-size:11px;transform:scaleX(1.0085);font-weight:700;color:#ffffff;">X</span>
<svg class="b" style="left:291.5px;top:84.5px;" width="29" height="29" viewBox="0 0 29 29"><circle cx="14.6" cy="15" r="12.7" fill="none" stroke="#3b3a39" stroke-width="1.3"/><path d="M22.6 4.6 C19 0.6 12 0.8 9.2 4.6 C4 5.6 0.6 11.6 2.2 17.6 C3 20.6 5 23.2 7.6 24.8 C5.6 19.6 6.2 13 9.8 8.6 C13 4.8 18.4 3.4 22.6 4.6 Z" fill="#3b3a39" stroke="#3b3a39" stroke-width="0.8"/><path d="M10.6 7.4 C11.6 13 13.6 17.4 16.6 20.4 C20 20.6 22.6 17.6 27 17.2 M6.4 23.4 C9.6 25.4 13.6 23.6 16.6 20.4" fill="none" stroke="#3b3a39" stroke-width="1.1" /></svg>
<svg class="b" style="left:345.5px;top:84.5px;" width="29" height="31" viewBox="0 0 29 31"><path d="M12.8 28.0 H0.7 V0.8 H13.499999999999998 L20.9 8.200000000000001 V10.8 M13.499999999999998 0.8 V8.200000000000001 H20.9" fill="none" stroke="#3b3a39" stroke-width="1.2" /><path d="M15 15.6 V27.2 C15 29.6 27 29.6 27 27.2 V15.6" fill="#fafafa" stroke="#d9730d" stroke-width="1.2"/><ellipse cx="21" cy="15.6" rx="6" ry="2.3" fill="#fafafa" stroke="#d9730d" stroke-width="1.2"/></svg>
<svg class="b" style="left:380.5px;top:82.5px;" width="31" height="31" viewBox="0 0 31 31"><rect x="9.4" y="3.2" width="20.4" height="3.2" rx="0" fill="#c8c6c4" stroke="#8a8886" stroke-width="0.8"/><path d="M3.2 10.5 V30 H30.2 V3 H9.5" fill="none" stroke="#3b3a39" stroke-width="1.2" /><path d="M3.2 15.6 H30.2 M3.2 22.6 H30.2 M12.2 15.6 V30 M21.2 6.4 V30" fill="none" stroke="#7a7876" stroke-width="1.0" /><path d="M8.4 0.5 V16.2 M0.6 8.2 H16.2" fill="none" stroke="#2e9e46" stroke-width="1.5" /></svg>
<svg class="b" style="left:431px;top:87px;" width="30" height="24" viewBox="0 0 30 24"><path d="M10.3 19.7 C9 21.6 7.6 22.6 6.4 22.6 C1.5 21.6 0.5 16.1 1.5 11.9 C3.1 5.7 8 1.2 13.2 1.2 C17.7 1.2 21 4.1 22.3 8.6 C23.2 12.5 21.6 15.8 18.7 16.4 C16 17.2 12.4 16.6 10.6 14" fill="none" stroke="#3b3a39" stroke-width="1.15" /><path d="M19.7 3.8 C21 2 22.4 1.2 23.6 1.2 C27.5 1.8 29.1 7.3 28.4 11.9 C27.5 17.7 22.6 22.6 17.1 22.6 C13.2 22.6 9.6 20.3 8 16.1 C6.7 12.5 8 8.6 10.6 7.3 C13.4 5.8 17.4 6.4 19.4 9.4" fill="none" stroke="#3b3a39" stroke-width="1.15" /><circle cx="15" cy="11.9" r="4.6" fill="none" stroke="#3b3a39" stroke-width="1.15"/></svg>
<svg class="b" style="left:490.5px;top:84.5px;" width="29" height="31" viewBox="0 0 29 31"><path d="M12.2 28.0 H0.7 V0.8 H13.499999999999998 L20.9 8.200000000000001 V13.2 M13.499999999999998 0.8 V8.200000000000001 H20.9" fill="none" stroke="#3b3a39" stroke-width="1.2" /><circle cx="19.9" cy="22.8" r="6.9" fill="#fafafa" stroke="#2b88d8" stroke-width="1.3"/><path d="M19.6 18.6 V23.2 H23.4" fill="none" stroke="#3b3a39" stroke-width="1.1" /></svg>
<svg class="b" style="left:560.5px;top:84.5px;" width="32" height="31" viewBox="0 0 32 31"><rect x="0.7" y="0.8" width="27.4" height="27.4" rx="0" fill="none" stroke="#3b3a39" stroke-width="1.2"/><rect x="0.7" y="0.8" width="27.4" height="3.4" rx="0" fill="#c8c6c4" stroke="#3b3a39" stroke-width="1.1"/><path d="M0.7 12.4 H20 M0.7 19.6 H13 M9.6 4.2 V25 M18.6 4.2 V13" fill="none" stroke="#7a7876" stroke-width="1.0" /><path d="M25.6 9.6 L28 9 L30 11 L29.6 13.2 L14.2 27 L9.6 29.6 L11.4 24.4 Z" fill="#fafafa" stroke="#fafafa" stroke-width="2.4"/><path d="M25.6 9.6 C26.6 8.6 28.2 8.6 29.2 9.8 C30.2 10.8 30.2 12.2 29.4 13.2 L14 27.2 L9.4 29.8 L11.2 24.6 Z" fill="#fafafa" stroke="#2b88d8" stroke-width="1.2" stroke-linejoin="round"/><path d="M11.2 24.6 L14 27.2 L9.4 29.8 Z" fill="#5aa5e0" stroke="#2b88d8" stroke-width="1"/><path d="M24.6 10.6 L28.4 14.2" fill="none" stroke="#2b88d8" stroke-width="0.9" /></svg>
<svg class="b" style="left:613.5px;top:84.5px;" width="29" height="31" viewBox="0 0 29 31"><path d="M11.2 28.0 H0.7 V0.8 H13.499999999999998 L20.9 8.200000000000001 V13.8 M13.499999999999998 0.8 V8.200000000000001 H20.9" fill="none" stroke="#3b3a39" stroke-width="1.2" /><path d="M13.2 21.4 A6.6 6.6 0 0 1 25.2 18.4 M26.4 24.4 A6.6 6.6 0 0 1 14.4 27.4" fill="none" stroke="#2e9e46" stroke-width="1.4" /><path d="M26.4 15 V19.2 H22.2 M13.2 30.4 V26.4 H17.4" fill="none" stroke="#2e9e46" stroke-width="1.3" /></svg>
<svg class="b" style="left:670.5px;top:84.5px;" width="30" height="31" viewBox="0 0 30 31"><rect x="0.8" y="12" width="8.2" height="16.2" rx="0" fill="#8cc0eb" stroke="#1a7ad4" stroke-width="1.2"/><rect x="9" y="1" width="8.4" height="27.2" rx="0" fill="#fafafa" stroke="#3b3a39" stroke-width="1.2"/><rect x="17.6" y="6.2" width="7.6" height="22" rx="0" fill="#c8c6c4" stroke="#a19f9d" stroke-width="0.9"/><path d="M21.6 15 V30.4 M14 22.8 H29.4" fill="none" stroke="#2e9e46" stroke-width="1.5" /></svg>
<svg class="b" style="left:707px;top:85px;" width="33" height="27" viewBox="0 0 33 27"><rect x="2.5" y="2.5" width="28.6" height="23" rx="0" fill="none" stroke="#3b3a39" stroke-width="1.1"/><rect x="0.9" y="0.9" width="3.2" height="3.2" fill="#1a7ad4"/><rect x="0.9" y="23.9" width="3.2" height="3.2" fill="#1a7ad4"/><rect x="29.5" y="0.9" width="3.2" height="3.2" fill="#1a7ad4"/><rect x="29.5" y="23.9" width="3.2" height="3.2" fill="#1a7ad4"/></svg>
<span class="t" style="left:717.70px;top:90px;font-size:19.6px;transform:scaleX(0.9332);color:#2b88d8;">A</span>
<svg class="b" style="left:755.5px;top:84.5px;" width="32" height="31" viewBox="0 0 32 31"><path d="M0.8 28.2 V12.2 H9 V1 H17.4 V6.2 H25.2 V11 M0.8 28.2 H8.6 M9 12.2 V24 M17.4 6.2 V17 M25.2 21.6 V28.2 H17" fill="none" stroke="#3b3a39" stroke-width="1.2" /><path d="M24.6 11.4 C25.6 10.4 27.2 10.4 28.2 11.6 C29.2 12.6 29.2 14 28.4 15 L13.4 28.4 L8.6 31 L10.6 26 Z" fill="#fafafa" stroke="#2b88d8" stroke-width="1.2" stroke-linejoin="round"/><path d="M10.6 26 L13.4 28.4 L8.6 31 Z" fill="#5aa5e0" stroke="#2b88d8" stroke-width="1"/><path d="M23.6 12.4 L27.4 16" fill="none" stroke="#2b88d8" stroke-width="0.9" /></svg>
<svg class="b" style="left:825.5px;top:84.5px;" width="20" height="29" viewBox="0 0 20 29"><rect x="0.8" y="0.8" width="17.6" height="26.6" rx="0" fill="#fafafa" stroke="#3b3a39" stroke-width="1.3"/><rect x="3.8" y="3.6" width="11.6" height="3.6" rx="0" fill="#8cc0eb" stroke="#1a7ad4" stroke-width="1.1"/><rect x="3.6" y="10.2" width="2.9" height="2.9" fill="#252423"/><rect x="8.7" y="10.2" width="2.9" height="2.9" fill="#252423"/><rect x="13.8" y="10.2" width="2.9" height="2.9" fill="#252423"/><rect x="3.6" y="16.1" width="2.9" height="2.9" fill="#252423"/><rect x="8.7" y="16.1" width="2.9" height="2.9" fill="#252423"/><rect x="13.8" y="16.1" width="2.9" height="2.9" fill="#252423"/><rect x="3.6" y="22.0" width="2.9" height="2.9" fill="#252423"/><rect x="8.7" y="22.0" width="2.9" height="2.9" fill="#252423"/><rect x="13.8" y="22.0" width="2.9" height="2.9" fill="#252423"/></svg>
<svg class="b" style="left:874.5px;top:84.5px;" width="20" height="29" viewBox="0 0 20 29"><rect x="0.8" y="0.8" width="17.6" height="26.6" rx="0" fill="#fafafa" stroke="#3b3a39" stroke-width="1.3"/><rect x="6.4" y="3.8" width="9.4" height="3" rx="0" fill="#c8c6c4" stroke="#8a8886" stroke-width="0.9"/><rect x="3.6" y="10.2" width="2.9" height="2.9" fill="#252423"/><rect x="8.7" y="10.2" width="2.9" height="2.9" fill="#252423"/><rect x="13.8" y="10.2" width="2.9" height="2.9" fill="#252423"/><rect x="3.6" y="16.1" width="2.9" height="2.9" fill="#252423"/><rect x="8.7" y="16.1" width="2.9" height="2.9" fill="#252423"/><rect x="13.8" y="16.1" width="2.9" height="2.9" fill="#252423"/><rect x="3.6" y="22.0" width="2.9" height="2.9" fill="#252423"/><rect x="8.7" y="22.0" width="2.9" height="2.9" fill="#252423"/><rect x="13.8" y="22.0" width="2.9" height="2.9" fill="#252423"/></svg>
<svg class="b" style="left:868.5px;top:82.5px;" width="14" height="21" viewBox="0 0 14 21"><path d="M6.2 0.6 H12.8 L9 6.4 H13 L1.2 19.8 L5 10.8 H1.4 Z" fill="#fbd38a" stroke="#d9730d" stroke-width="1.1" stroke-linejoin="round"/></svg>
<svg class="b" style="left:943.5px;top:82.5px;" width="30" height="32" viewBox="0 0 30 32"><path d="M12.3 2.9 H1 V29.8 H21 V17.6" fill="none" stroke="#a9d3ee" stroke-width="1.05" /><polygon points="8.1,10 18.4,20 13.9,24.5 4.1,14" fill="#fafafa" stroke="#a9d3ee" stroke-width="1"/><polygon points="8.2,12 15.9,19.6 13.9,21.8 6.3,14" fill="none" stroke="#a9d3ee" stroke-width="0.7"/><path d="M8 14 L14.6 20.2" fill="none" stroke="#a9d3ee" stroke-width="1.5" /><polygon points="16.1,0.8 27.3,12 22.8,16.4 11.5,5.1" fill="#fafafa" stroke="#a9d3ee" stroke-width="1"/><polygon points="11.4,6.2 13.3,4.6 23,14.4 20.6,16.6" fill="#a9d3ee" stroke="#a9d3ee" stroke-width="0.8"/><polygon points="21.9,0.8 27.5,6 23.1,8.4 19.2,4.4" fill="#fafafa" stroke="#a9d3ee" stroke-width="1"/></svg>
<svg class="b" style="left:1008.8px;top:84.5px;" width="29" height="31" viewBox="0 0 29 31"><path d="M11 8.8 V3 C11 1.8 11.9 0.9 13.1 0.9 H19.2 C20.4 0.9 21.3 1.8 21.3 3 V12.6" fill="none" stroke="#3b3a39" stroke-width="1.15" /><path d="M6 16.8 V11 C6 9.8 6.9 8.9 8.1 8.9 H14.2 C15.4 8.9 16.3 9.8 16.3 11 V15 M16.3 21.5 V27.8" fill="none" stroke="#3b3a39" stroke-width="1.15" /><path d="M2.9 16.9 H9 C10.2 16.9 11.1 17.8 11.1 19 V27.8 H2.9 C1.7 27.8 0.8 26.9 0.8 25.7 V19 C0.8 17.8 1.7 16.9 2.9 16.9 Z M11.1 27.8 H19.4" fill="none" stroke="#3b3a39" stroke-width="1.15" /><path d="M21.5 30.4 V15.2 M15.3 21.3 L21.5 15 L27.7 21.3" fill="none" stroke="#1f7fcf" stroke-width="1.3" /></svg>
<svg class="b" style="left:1064.5px;top:84.5px;" width="33" height="29" viewBox="0 0 33 29"><path d="M18.1 0.95 H22.3 C24.2 0.95 25.1 2.4 25.6 4.2 C26.1 6 26.8 7.4 27.8 8 H16.4 Z" fill="#8fc7a5" stroke="#1b8a4b" stroke-width="1.2" stroke-linejoin="round"/><path d="M5 20.5 C6.2 21 6.9 22.6 7.4 24.4 C7.9 26.2 8.9 27.9 10.8 27.9 H14.6 L16.5 20.5 Z" fill="#8fc7a5" stroke="#1b8a4b" stroke-width="1.2" stroke-linejoin="round"/><polygon points="16.4,8 19.9,8 16.6,20.5 13.1,20.5" fill="#ffffff" stroke="#1b8a4b" stroke-width="1"/><path d="M9 0.95 H18.1 L13.3 19.2 C13 20.2 12.4 20.5 11.6 20.5 H3.8 C1.6 20.5 0.4 18.9 0.9 17 L4.7 4 C5.3 2 6.8 0.95 9 0.95 Z" fill="#fafafa" stroke="#1b8a4b" stroke-width="1.3" stroke-linejoin="round"/><path d="M14.6 27.9 L19.4 9.4 C19.7 8.4 20.3 8 21.1 8 H28.9 C31.1 8 32.3 9.6 31.8 11.5 L28 24.8 C27.4 26.8 25.9 27.9 23.7 27.9 Z" fill="#fafafa" stroke="#1b8a4b" stroke-width="1.3" stroke-linejoin="round"/></svg>
<svg class="b" style="left:21.7px;top:181.3px;" width="14.2" height="14.2" viewBox="0 0 15 15"><path d="M0.8 0.4 V13.6 H14.6" fill="none" stroke="#1b1a19" stroke-width="1.3" /><rect x="3.4" y="4.6" width="2.6" height="7" rx="0.6" fill="none" stroke="#1b1a19" stroke-width="1.1"/><rect x="7.4" y="6.6" width="2.6" height="5" rx="0.6" fill="none" stroke="#1b1a19" stroke-width="1.1"/><rect x="11.2" y="2.4" width="2.6" height="9.2" rx="0.6" fill="none" stroke="#1b1a19" stroke-width="1.1"/></svg>
<svg class="b" style="left:20.7px;top:219.8px;" width="16" height="15.1" viewBox="0 0 17 16"><rect x="0.8" y="0.8" width="15.4" height="14.2" rx="0" fill="none" stroke="#7a7876" stroke-width="1.3"/><path d="M0.8 3.8 H16.2 M0.8 7.6 H16.2 M0.8 11.4 H16.2 M6 3.8 V15 M11.2 3.8 V15" fill="none" stroke="#7a7876" stroke-width="1.1" /></svg>
<svg class="b" style="left:19.8px;top:258.8px;" width="18" height="18" viewBox="0 0 19 19"><rect x="0.8" y="5.4" width="7" height="7.6" rx="0" fill="none" stroke="#7a7876" stroke-width="1.2"/><rect x="10.8" y="0.8" width="7.2" height="7.2" rx="0" fill="none" stroke="#7a7876" stroke-width="1.2"/><rect x="10.8" y="10.6" width="7.2" height="7.4" rx="0" fill="none" stroke="#7a7876" stroke-width="1.2"/><path d="M0.8 8.4 H7.8 M10.8 3.6 H18 M10.8 13.4 H18 M7.8 6.6 H5 V3.4 H10.8 M5 13 V15 H10.8" fill="none" stroke="#7a7876" stroke-width="1.1" /></svg>
<svg class="b" style="left:18.5px;top:299.5px;" width="19" height="18" viewBox="0 0 19 18"><path d="M5.2 9.4 V0.8 H11.6 L16 5.2 V14.4 C16 15.8 15 16.4 14 16.4 M11.6 0.8 V5.2 H16" fill="none" stroke="#7a7876" stroke-width="1.1" /></svg>
<span class="t" style="left:18.80px;top:311px;font-size:6.6px;transform:scaleX(0.9903);font-weight:700;color:#7a7876;">DAX</span>
<svg class="b" style="left:60.5px;top:986.5px;" width="20" height="16" viewBox="0 0 20 16"><rect x="1.4" y="1.6" width="17.2" height="10.4" rx="0" fill="#fafafa" stroke="#484644" stroke-width="1.8"/><path d="M10 12.8 V14.6 M6.6 14.8 H13.4" fill="none" stroke="#484644" stroke-width="1.2" /></svg>
<svg class="b" style="left:108px;top:984.5px;" width="14" height="21" viewBox="0 0 14 21"><rect x="1.4" y="1.2" width="10.8" height="18.8" rx="1.2" fill="#fafafa" stroke="#3b3a39" stroke-width="1.4"/><rect x="5.6" y="16" width="2.6" height="1.6" fill="#3b3a39"/></svg>
<svg class="b" style="left:142.5px;top:994px;" width="5" height="8" viewBox="0 0 5 8"><path d="M4.6 0 V7.6 L0.2 3.8 Z" fill="#c8c6c4"/></svg>
<svg class="b" style="left:164.8px;top:994px;" width="5" height="8" viewBox="0 0 5 8"><path d="M0.2 0 V7.6 L4.6 3.8 Z" fill="#c8c6c4"/></svg>
<svg class="b" style="left:1702px;top:1022px;" width="16" height="12" viewBox="0 0 16 12"><rect x="0.5" y="0.5" width="15" height="11" rx="0" fill="none" stroke="#3b3a39" stroke-width="1"/><path d="M2.5 5 V2.5 H5 M11 2.5 H13.5 V5 M13.5 7 V9.5 H11 M5 9.5 H2.5 V7" fill="none" stroke="#3b3a39" stroke-width="1" /></svg>
</body></html>
